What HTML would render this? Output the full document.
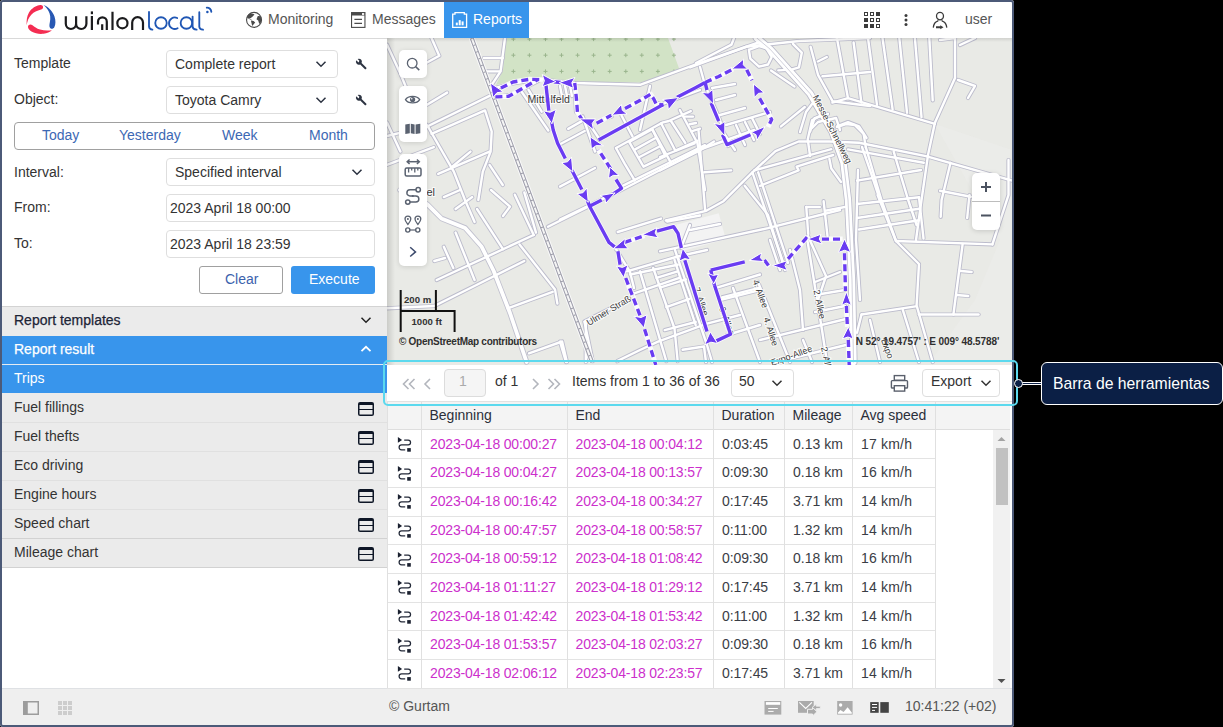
<!DOCTYPE html>
<html><head><meta charset="utf-8">
<style>
*{box-sizing:border-box;margin:0;padding:0}
html,body{width:1223px;height:727px;overflow:hidden;background:#000;font-family:"Liberation Sans",sans-serif;position:relative}
.a{position:absolute}
.t{position:absolute;white-space:nowrap;font-size:14px;line-height:16px;color:#333}
.sel{position:absolute;border:1px solid #dedede;border-radius:4px;background:#fff}
svg{position:absolute;overflow:visible}
</style></head><body>
<div id="app" class="a" style="left:0;top:0;width:1014px;height:727px;background:#fff;overflow:hidden;border-radius:3px">

<!-- HEADER -->
<div class="a" style="left:2px;top:38px;width:385px;height:1px;background:#d9d9d9"></div>
<div class="a" style="left:444px;top:2px;width:85px;height:36px;background:#3895ec"></div>
<div class="t" style="left:268px;top:11px;color:#555">Monitoring</div>
<div class="t" style="left:372px;top:11px;color:#555">Messages</div>
<div class="t" style="left:473px;top:11px;color:#fff">Reports</div>
<div class="t" style="left:965px;top:11px;color:#555">user</div>

<!-- LEFT PANEL FORM -->
<div class="t" style="left:14px;top:55px">Template</div>
<div class="sel" style="left:166px;top:50px;width:172px;height:28px"></div>
<div class="t" style="left:175px;top:56px">Complete report</div>
<div class="t" style="left:14px;top:91px">Object:</div>
<div class="sel" style="left:166px;top:86px;width:172px;height:28px"></div>
<div class="t" style="left:175px;top:92px">Toyota Camry</div>

<div class="a" style="left:14px;top:122px;width:361px;height:28px;border:1px solid #a0a0a0;border-radius:4px"></div>
<div class="t" style="left:42px;top:127px;color:#3c68b4">Today</div>
<div class="t" style="left:119px;top:127px;color:#3c68b4">Yesterday</div>
<div class="t" style="left:222px;top:127px;color:#3c68b4">Week</div>
<div class="t" style="left:309px;top:127px;color:#3c68b4">Month</div>

<div class="t" style="left:14px;top:164px">Interval:</div>
<div class="sel" style="left:166px;top:158px;width:209px;height:28px"></div>
<div class="t" style="left:175px;top:164px">Specified interval</div>
<div class="t" style="left:14px;top:199px">From:</div>
<div class="sel" style="left:166px;top:194px;width:209px;height:28px"></div>
<div class="t" style="left:170px;top:200px">2023 April 18 00:00</div>
<div class="t" style="left:14px;top:235px">To:</div>
<div class="sel" style="left:166px;top:230px;width:209px;height:28px"></div>
<div class="t" style="left:170px;top:236px">2023 April 18 23:59</div>

<div class="a" style="left:199px;top:266px;width:84px;height:28px;border:1px solid #a0a0a0;border-radius:3px;background:#fff"></div>
<div class="t" style="left:225px;top:271px;color:#3c62ad">Clear</div>
<div class="a" style="left:291px;top:266px;width:84px;height:28px;border-radius:3px;background:#3895ec"></div>
<div class="t" style="left:309px;top:271px;color:#fff">Execute</div>

<!-- ACCORDION -->
<div class="a" style="left:2px;top:306px;width:385px;height:1px;background:#d3d3d3"></div>
<div class="a" style="left:2px;top:307px;width:385px;height:29px;background:#ebebeb"></div>
<div class="t" style="left:14px;top:312px;-webkit-text-stroke:0.25px #1d2436;color:#1d2436">Report templates</div>
<div class="a" style="left:2px;top:336px;width:385px;height:28px;background:#3895ec"></div>
<div class="t" style="left:14px;top:341px;color:#fff;-webkit-text-stroke:0.25px #fff">Report result</div>
<div class="a" style="left:2px;top:364px;width:385px;height:1px;background:#e4ebf2"></div>
<div class="a" style="left:2px;top:365px;width:385px;height:28px;background:#3895ec"></div>
<div class="t" style="left:14px;top:370px;color:#fff">Trips</div>

<!-- MAP -->
<div class="a" style="left:387px;top:38px;width:625px;height:327px;background:#e9eae6;overflow:hidden">
<svg style="left:0;top:0" width="625" height="327" viewBox="387 38 625 327">
<path d="M505 38 L503 70 L496 85 L515 80.5 L540 77.5 L576 81.5 L640 82.5 L668 75 L680 71 L668 38 Z" fill="#d2e3c6"/>
<g stroke="#9ab58d" stroke-width="1"><path d="M511.4 39.1 H515.4 M513.4 37.1 V41.1"/><path d="M527.4 39.1 H531.4 M529.4 37.1 V41.1"/><path d="M543.5 39.1 H547.5 M545.5 37.1 V41.1"/><path d="M559.5 39.1 H563.5 M561.5 37.1 V41.1"/><path d="M575.6 39.1 H579.6 M577.6 37.1 V41.1"/><path d="M591.6 39.1 H595.6 M593.6 37.1 V41.1"/><path d="M607.7 39.1 H611.7 M609.7 37.1 V41.1"/><path d="M623.8 39.1 H627.8 M625.8 37.1 V41.1"/><path d="M639.8 39.1 H643.8 M641.8 37.1 V41.1"/><path d="M655.9 39.1 H659.9 M657.9 37.1 V41.1"/><path d="M671.9 39.1 H675.9 M673.9 37.1 V41.1"/><path d="M511.4 55.2 H515.4 M513.4 53.2 V57.2"/><path d="M527.4 55.2 H531.4 M529.4 53.2 V57.2"/><path d="M543.5 55.2 H547.5 M545.5 53.2 V57.2"/><path d="M559.5 55.2 H563.5 M561.5 53.2 V57.2"/><path d="M575.6 55.2 H579.6 M577.6 53.2 V57.2"/><path d="M591.6 55.2 H595.6 M593.6 53.2 V57.2"/><path d="M607.7 55.2 H611.7 M609.7 53.2 V57.2"/><path d="M623.8 55.2 H627.8 M625.8 53.2 V57.2"/><path d="M639.8 55.2 H643.8 M641.8 53.2 V57.2"/><path d="M655.9 55.2 H659.9 M657.9 53.2 V57.2"/><path d="M671.9 55.2 H675.9 M673.9 53.2 V57.2"/><path d="M511.4 71.4 H515.4 M513.4 69.4 V73.4"/><path d="M527.4 71.4 H531.4 M529.4 69.4 V73.4"/><path d="M543.5 71.4 H547.5 M545.5 69.4 V73.4"/><path d="M559.5 71.4 H563.5 M561.5 69.4 V73.4"/><path d="M575.6 71.4 H579.6 M577.6 69.4 V73.4"/><path d="M591.6 71.4 H595.6 M593.6 69.4 V73.4"/><path d="M607.7 71.4 H611.7 M609.7 69.4 V73.4"/><path d="M623.8 71.4 H627.8 M625.8 69.4 V73.4"/><path d="M639.8 71.4 H643.8 M641.8 69.4 V73.4"/><path d="M655.9 71.4 H659.9 M657.9 69.4 V73.4"/><path d="M671.9 71.4 H675.9 M673.9 69.4 V73.4"/></g>
<g fill="#fff"><rect x="679" y="218.5" width="44" height="27" fill="#f3f3f3" transform="rotate(-15 701 232)"/></g><path d="M935 124 L1012 150 L1012 362 L930 362 L975 300 L1000 240 Z" fill="#ededeb" opacity="0.6"/>
<g fill="none" stroke-linejoin="round" stroke-linecap="round">
<polyline points="387.0,44.7 400.4,73.6 416.0,111.5 428.2,127.0" stroke="#bcbccc" stroke-width="4.2"/><polyline points="431.5,38.0 439.3,55.8 427.0,62.5" stroke="#bcbccc" stroke-width="4.2"/><polyline points="427.0,104.8 447.1,92.6" stroke="#bcbccc" stroke-width="4.2"/><polyline points="387.0,136.0 428.2,126.0 491.7,94.8" stroke="#bcbccc" stroke-width="4.2"/><polyline points="387.0,122.6 400.4,151.6" stroke="#bcbccc" stroke-width="4.2"/><polyline points="431.5,133.8 485.0,110.4 491.7,131.5 490.6,151.6 482.8,171.6 478.3,200.0" stroke="#bcbccc" stroke-width="4.2"/><polyline points="428.2,127.0 453.8,171.6 465.0,200.0 474.6,222.0" stroke="#bcbccc" stroke-width="4.2"/><polyline points="451.6,167.2 470.5,151.6" stroke="#bcbccc" stroke-width="4.2"/><polyline points="438.2,173.9 489.5,151.6" stroke="#bcbccc" stroke-width="4.2"/><polyline points="387.0,164.9 433.8,147.1" stroke="#bcbccc" stroke-width="4.2"/><polyline points="489.5,164.9 502.8,185.0" stroke="#bcbccc" stroke-width="4.2"/><polyline points="483.9,58.0 502.8,58.0" stroke="#bcbccc" stroke-width="4.2"/><polyline points="485.0,71.4 500.0,71.4" stroke="#bcbccc" stroke-width="4.2"/><polyline points="505.0,38.0 500.6,71.4 491.7,84.8" stroke="#bcbccc" stroke-width="4.2"/><polyline points="436.7,280.0 533.7,235.0" stroke="#bcbccc" stroke-width="4.2"/><polyline points="387.0,308.3 434.3,306.0 477.0,284.7 524.3,261.0" stroke="#bcbccc" stroke-width="4.2"/><polyline points="519.5,244.4 555.0,289.4 557.4,303.6" stroke="#bcbccc" stroke-width="4.2"/><polyline points="507.7,308.3 552.7,291.8" stroke="#bcbccc" stroke-width="4.2"/><polyline points="455.6,232.6 474.6,280.0" stroke="#bcbccc" stroke-width="4.2"/><polyline points="443.8,246.8 453.3,268.0" stroke="#bcbccc" stroke-width="4.2"/><polyline points="434.3,261.0 445.0,258.0" stroke="#bcbccc" stroke-width="4.2"/><polyline points="477.0,209.0 503.0,249.2" stroke="#bcbccc" stroke-width="4.2"/><polyline points="491.0,190.0 510.0,206.6 503.0,216.0" stroke="#bcbccc" stroke-width="4.2"/><polyline points="514.8,194.7 533.7,235.0" stroke="#bcbccc" stroke-width="4.2"/><polyline points="524.3,192.4 536.0,232.6" stroke="#bcbccc" stroke-width="4.2"/><polyline points="548.0,226.7 588.2,206.6" stroke="#bcbccc" stroke-width="4.2"/><polyline points="443.8,197.1 460.0,190.0" stroke="#bcbccc" stroke-width="4.2"/><polyline points="455.6,209.0 472.2,197.1" stroke="#bcbccc" stroke-width="4.2"/><polyline points="529.0,353.3 562.1,341.5 566.9,362.0" stroke="#bcbccc" stroke-width="4.2"/><polyline points="585.8,322.5 585.8,362.0" stroke="#bcbccc" stroke-width="4.2"/><polyline points="584.5,321.5 631.3,298.0" stroke="#bcbccc" stroke-width="4.2"/><polyline points="491.7,89.0 510.0,84.0 540.0,79.0 560.0,81.5 575.0,83.0 600.0,83.7 640.0,84.8 696.0,64.4 736.9,50.0 760.0,42.0" stroke="#bcbccc" stroke-width="4.2"/><polyline points="495.0,97.0 510.0,95.0 540.0,80.0" stroke="#bcbccc" stroke-width="4.2"/><polyline points="521.8,92.0 548.3,130.5" stroke="#bcbccc" stroke-width="4.2"/><polyline points="528.4,89.7 541.7,111.7" stroke="#bcbccc" stroke-width="4.2"/><polyline points="560.0,86.0 562.0,96.0" stroke="#bcbccc" stroke-width="4.2"/><polyline points="565.0,86.0 567.0,96.0" stroke="#bcbccc" stroke-width="4.2"/><polyline points="570.0,86.0 572.0,96.0" stroke="#bcbccc" stroke-width="4.2"/><polyline points="574.7,83.1 576.0,112.0 590.0,125.0 600.0,140.0" stroke="#bcbccc" stroke-width="4.2"/><polyline points="614.6,246.8 630.0,272.0 634.0,288.0" stroke="#bcbccc" stroke-width="4.2"/><polyline points="675.0,250.0 707.0,345.0 712.0,362.0" stroke="#bcbccc" stroke-width="4.2"/><polyline points="681.0,248.0 690.0,225.0" stroke="#bcbccc" stroke-width="4.2"/><polyline points="690.0,230.0 700.0,228.0 720.0,224.0" stroke="#bcbccc" stroke-width="4.2"/><polyline points="720.0,300.0 760.0,290.0" stroke="#bcbccc" stroke-width="4.2"/><polyline points="733.0,288.0 760.0,362.0" stroke="#bcbccc" stroke-width="4.2"/><polyline points="758.0,282.0 790.0,362.0" stroke="#bcbccc" stroke-width="4.2"/><polyline points="790.0,250.0 800.0,290.0 803.0,330.0" stroke="#bcbccc" stroke-width="4.2"/><polyline points="770.0,240.0 780.0,270.0" stroke="#bcbccc" stroke-width="4.2"/><polyline points="808.0,236.0 826.0,276.0 818.0,300.0" stroke="#bcbccc" stroke-width="4.2"/><polyline points="815.0,282.0 840.0,272.0" stroke="#bcbccc" stroke-width="4.2"/><polyline points="727.0,335.0 760.0,325.0" stroke="#bcbccc" stroke-width="4.2"/><polyline points="760.0,340.0 850.0,318.0" stroke="#bcbccc" stroke-width="4.2"/><polyline points="776.0,362.0 850.0,344.0" stroke="#bcbccc" stroke-width="4.2"/><polyline points="803.0,340.0 812.0,362.0" stroke="#bcbccc" stroke-width="4.2"/><polyline points="807.0,238.0 822.0,330.0 827.0,362.0" stroke="#bcbccc" stroke-width="4.2"/><polyline points="815.0,295.0 845.0,290.0" stroke="#bcbccc" stroke-width="4.2"/><polyline points="815.0,312.0 845.0,306.0" stroke="#bcbccc" stroke-width="4.2"/><polyline points="560.0,219.6 621.9,189.7 700.0,149.5 754.3,130.0" stroke="#bcbccc" stroke-width="4.2"/><polyline points="560.0,186.6 595.0,168.0" stroke="#bcbccc" stroke-width="4.2"/><polyline points="560.0,144.3 584.7,131.0" stroke="#bcbccc" stroke-width="4.2"/><polyline points="568.2,128.9 582.7,120.6" stroke="#bcbccc" stroke-width="4.2"/><polyline points="582.7,116.5 595.0,151.5" stroke="#bcbccc" stroke-width="4.2"/><polyline points="617.7,232.0 661.0,218.6" stroke="#bcbccc" stroke-width="4.2"/><polyline points="667.2,221.6 700.0,215.5" stroke="#bcbccc" stroke-width="4.2"/><polyline points="665.8,220.5 706.2,210.8 723.5,201.2 752.4,172.3 775.5,151.2 798.6,141.5 829.4,141.5 859.0,142.7 926.0,156.1 1012.0,180.6" stroke="#bcbccc" stroke-width="4.2"/><polyline points="754.3,170.4 831.3,149.2" stroke="#bcbccc" stroke-width="4.2"/><polyline points="744.7,185.8 767.8,214.7 785.0,270.0" stroke="#bcbccc" stroke-width="4.2"/><polyline points="752.4,172.3 783.2,262.8" stroke="#bcbccc" stroke-width="4.2"/><polyline points="758.2,172.3 788.0,262.8" stroke="#bcbccc" stroke-width="4.2"/><polyline points="760.0,185.8 798.6,170.4 796.7,166.6 833.2,155.0" stroke="#bcbccc" stroke-width="4.2"/><polyline points="660.0,170.4 698.5,151.2 714.0,141.5" stroke="#bcbccc" stroke-width="4.2"/><polyline points="698.5,130.0 705.2,210.8" stroke="#bcbccc" stroke-width="4.2"/><polyline points="704.3,172.3 731.2,170.4" stroke="#bcbccc" stroke-width="4.2"/><polyline points="660.0,157.0 694.6,143.5" stroke="#bcbccc" stroke-width="4.2"/><polyline points="660.0,251.3 767.8,228.2 840.0,210.0" stroke="#bcbccc" stroke-width="4.2"/><polyline points="806.3,207.0 819.8,207.0" stroke="#bcbccc" stroke-width="4.2"/><polyline points="806.3,207.0 808.2,234.0" stroke="#bcbccc" stroke-width="4.2"/><polyline points="823.6,201.2 827.5,235.9" stroke="#bcbccc" stroke-width="4.2"/><polyline points="825.5,210.8 844.8,207.0" stroke="#bcbccc" stroke-width="4.2"/><polyline points="829.4,158.9 831.3,168.5 841.0,182.0" stroke="#bcbccc" stroke-width="4.2"/><polyline points="812.0,128.0 818.0,122.0 836.0,118.0 840.0,130.0" stroke="#bcbccc" stroke-width="4.2"/><polyline points="800.0,132.0 806.0,112.0 812.0,104.0" stroke="#bcbccc" stroke-width="4.2"/><polyline points="836.9,127.1 846.0,124.0 854.7,125.0 863.6,133.8 865.8,147.2" stroke="#bcbccc" stroke-width="4.2"/><polyline points="810.1,131.6 814.6,118.2 828.0,113.8" stroke="#bcbccc" stroke-width="4.2"/><polyline points="807.9,140.5 810.1,156.0" stroke="#bcbccc" stroke-width="4.2"/><polyline points="862.0,147.0 870.0,170.0 880.0,200.0" stroke="#bcbccc" stroke-width="4.2"/><polyline points="622.6,185.9 705.0,145.2" stroke="#bcbccc" stroke-width="4.2"/><polyline points="616.0,148.0 662.2,122.7 668.8,121.0 690.8,111.1" stroke="#bcbccc" stroke-width="4.2"/><polyline points="616.0,148.0 624.8,163.9 634.7,180.4" stroke="#bcbccc" stroke-width="4.2"/><polyline points="629.2,141.9 643.5,166.7 665.5,156.2 652.3,129.3 629.2,141.9" stroke="#bcbccc" stroke-width="4.2"/><polyline points="634.7,149.6 655.6,138.0" stroke="#bcbccc" stroke-width="4.2"/><polyline points="639.1,157.3 660.0,146.3" stroke="#bcbccc" stroke-width="4.2"/><polyline points="652.3,129.3 671.0,162.8" stroke="#bcbccc" stroke-width="4.2"/><polyline points="661.1,123.2 675.4,150.7 697.4,140.8" stroke="#bcbccc" stroke-width="4.2"/><polyline points="671.0,121.0 685.3,143.0" stroke="#bcbccc" stroke-width="4.2"/><polyline points="679.8,110.0 697.4,143.0 705.0,190.0" stroke="#bcbccc" stroke-width="4.2"/><polyline points="684.0,116.6 693.0,116.6" stroke="#bcbccc" stroke-width="4.2"/><polyline points="689.7,124.3 696.0,123.0" stroke="#bcbccc" stroke-width="4.2"/><polyline points="693.0,130.9 700.0,128.7" stroke="#bcbccc" stroke-width="4.2"/><polyline points="605.0,118.8 611.6,116.6" stroke="#bcbccc" stroke-width="4.2"/><polyline points="621.5,115.5 632.5,136.4" stroke="#bcbccc" stroke-width="4.2"/><polyline points="748.9,49.8 750.3,58.6 759.0,66.7 768.0,64.5 771.7,57.0 766.5,48.3 759.0,46.1 748.9,49.8" stroke="#bcbccc" stroke-width="4.2"/><polyline points="690.0,67.4 746.0,46.8 799.0,41.0 837.0,39.5 870.0,38.0" stroke="#bcbccc" stroke-width="4.2"/><polyline points="696.0,63.0 731.5,44.6 734.0,38.0" stroke="#bcbccc" stroke-width="4.2"/><polyline points="793.0,43.9 801.8,52.7 798.9,67.4 791.5,69.6 778.3,70.4" stroke="#bcbccc" stroke-width="4.2"/><polyline points="771.0,70.4 794.5,86.5" stroke="#bcbccc" stroke-width="4.2"/><polyline points="781.0,126.4 804.8,107.0" stroke="#bcbccc" stroke-width="4.2"/><polyline points="807.7,139.5 812.0,120.4 822.4,114.5" stroke="#bcbccc" stroke-width="4.2"/><polyline points="837.0,126.3 848.0,122.0 859.0,126.3 866.5,138.0" stroke="#bcbccc" stroke-width="4.2"/><polyline points="810.6,46.8 818.0,74.8 832.7,101.3 870.0,106.0" stroke="#bcbccc" stroke-width="4.2"/><polyline points="817.9,61.5 826.8,57.0" stroke="#bcbccc" stroke-width="4.2"/><polyline points="822.4,76.3 870.0,72.0" stroke="#bcbccc" stroke-width="4.2"/><polyline points="627.0,271.3 677.7,256.5 707.0,250.0" stroke="#bcbccc" stroke-width="4.2"/><polyline points="630.3,274.5 677.7,264.7" stroke="#bcbccc" stroke-width="4.2"/><polyline points="632.0,294.2 679.4,277.8" stroke="#bcbccc" stroke-width="4.2"/><polyline points="717.0,287.6 760.0,274.5" stroke="#bcbccc" stroke-width="4.2"/><polyline points="722.0,297.4 760.0,287.6" stroke="#bcbccc" stroke-width="4.2"/><polyline points="640.0,271.3 666.3,361.2" stroke="#bcbccc" stroke-width="4.2"/><polyline points="653.2,268.0 674.5,328.5 677.7,361.2" stroke="#bcbccc" stroke-width="4.2"/><polyline points="674.5,259.8 695.7,325.2" stroke="#bcbccc" stroke-width="4.2"/><polyline points="656.5,277.8 677.7,271.3" stroke="#bcbccc" stroke-width="4.2"/><polyline points="660.0,287.6 686.0,279.4" stroke="#bcbccc" stroke-width="4.2"/><polyline points="666.3,307.2 689.2,299.0" stroke="#bcbccc" stroke-width="4.2"/><polyline points="664.7,330.1 695.7,322.0" stroke="#bcbccc" stroke-width="4.2"/><polyline points="617.2,361.2 640.0,350.0 658.0,341.6 707.0,323.6 740.0,315.0" stroke="#bcbccc" stroke-width="4.2"/><polyline points="682.6,349.8 704.0,346.5 706.0,362.0" stroke="#bcbccc" stroke-width="4.2"/><polyline points="584.5,322.0 592.7,361.2" stroke="#bcbccc" stroke-width="4.2"/><polyline points="560.0,341.6 566.0,362.0" stroke="#bcbccc" stroke-width="4.2"/><polyline points="640.0,100.0 649.8,93.9 655.1,102.2 661.2,104.5 700.0,90.0" stroke="#bcbccc" stroke-width="4.2"/><polyline points="650.0,86.0 640.0,130.0" stroke="#bcbccc" stroke-width="4.2"/><polyline points="700.0,67.0 705.0,85.0 720.0,120.0 728.0,146.0" stroke="#bcbccc" stroke-width="4.2"/><polyline points="712.0,88.0 735.0,84.0" stroke="#bcbccc" stroke-width="4.2"/><polyline points="716.0,100.0 735.0,95.0" stroke="#bcbccc" stroke-width="4.2"/><polyline points="720.0,115.0 745.0,108.0" stroke="#bcbccc" stroke-width="4.2"/><polyline points="726.0,125.0 770.0,112.0" stroke="#bcbccc" stroke-width="4.2"/><polyline points="725.0,135.0 735.0,150.0" stroke="#bcbccc" stroke-width="4.2"/><polyline points="736.0,125.0 745.0,145.0" stroke="#bcbccc" stroke-width="4.2"/><polyline points="745.0,122.0 754.0,140.0" stroke="#bcbccc" stroke-width="4.2"/><polyline points="752.0,118.0 760.0,134.0" stroke="#bcbccc" stroke-width="4.2"/><polyline points="832.4,102.6 848.0,98.2 934.9,123.8" stroke="#bcbccc" stroke-width="4.2"/><polyline points="836.9,38.0 848.0,98.2" stroke="#bcbccc" stroke-width="4.2"/><polyline points="853.6,42.5 861.4,102.6" stroke="#bcbccc" stroke-width="4.2"/><polyline points="868.0,38.0 877.0,104.9" stroke="#bcbccc" stroke-width="4.2"/><polyline points="882.5,38.0 892.6,109.3" stroke="#bcbccc" stroke-width="4.2"/><polyline points="899.3,38.0 907.0,112.7" stroke="#bcbccc" stroke-width="4.2"/><polyline points="914.9,38.0 921.5,117.1" stroke="#bcbccc" stroke-width="4.2"/><polyline points="929.3,38.0 932.7,100.4" stroke="#bcbccc" stroke-width="4.2"/><polyline points="940.0,40.0 955.0,38.0" stroke="#bcbccc" stroke-width="4.2"/><polyline points="960.0,45.0 975.0,38.0" stroke="#bcbccc" stroke-width="4.2"/><polyline points="958.0,80.0 975.0,86.0 968.0,98.0" stroke="#bcbccc" stroke-width="4.2"/><polyline points="955.0,38.0 955.0,78.1 934.9,122.7 928.2,153.9 921.5,200.0 916.0,240.0" stroke="#bcbccc" stroke-width="4.2"/><polyline points="848.0,149.4 923.8,162.8" stroke="#bcbccc" stroke-width="4.2"/><polyline points="857.0,180.6 921.0,170.0" stroke="#bcbccc" stroke-width="4.2"/><polyline points="865.8,147.2 881.4,200.0 896.0,241.0" stroke="#bcbccc" stroke-width="4.2"/><polyline points="893.7,151.7 908.2,200.0 916.6,225.0" stroke="#bcbccc" stroke-width="4.2"/><polyline points="950.5,162.8 941.6,200.0 940.7,216.8" stroke="#bcbccc" stroke-width="4.2"/><polyline points="969.5,195.0 967.2,218.0" stroke="#bcbccc" stroke-width="4.2"/><polyline points="940.0,190.8 970.8,196.8" stroke="#bcbccc" stroke-width="4.2"/><polyline points="1008.5,160.0 1008.5,195.0 992.4,244.4" stroke="#bcbccc" stroke-width="4.2"/><polyline points="857.0,204.0 919.0,197.3" stroke="#bcbccc" stroke-width="4.2"/><polyline points="857.0,218.0 919.0,208.8" stroke="#bcbccc" stroke-width="4.2"/><polyline points="859.0,229.5 919.0,220.3" stroke="#bcbccc" stroke-width="4.2"/><polyline points="877.6,195.0 896.0,241.0 919.0,264.0 916.6,305.3 932.7,362.0" stroke="#bcbccc" stroke-width="4.2"/><polyline points="896.0,241.0 992.4,244.4" stroke="#bcbccc" stroke-width="4.2"/><polyline points="962.6,244.4 953.4,314.5" stroke="#bcbccc" stroke-width="4.2"/><polyline points="959.0,270.8 971.7,272.0" stroke="#bcbccc" stroke-width="4.2"/><polyline points="956.8,295.0 968.3,296.0" stroke="#bcbccc" stroke-width="4.2"/><polyline points="861.5,314.5 915.5,306.4" stroke="#bcbccc" stroke-width="4.2"/><polyline points="918.9,314.5 978.6,314.5" stroke="#bcbccc" stroke-width="4.2"/><polyline points="902.8,309.9 918.9,362.0" stroke="#bcbccc" stroke-width="4.2"/><polyline points="861.5,314.5 857.0,332.8" stroke="#bcbccc" stroke-width="4.2"/><polyline points="870.0,320.0 880.0,362.0" stroke="#bcbccc" stroke-width="4.2"/><polyline points="919.0,197.3 923.5,238.6" stroke="#bcbccc" stroke-width="4.2"/><polyline points="858.0,170.0 856.0,240.0 860.0,300.0" stroke="#bcbccc" stroke-width="4.2"/><polyline points="400.0,190.0 427.2,204.2 441.4,218.4 465.1,227.9 481.7,246.8 493.5,270.5 510.0,313.0 526.6,362.0" stroke="#c0c0ce" stroke-width="5.5"/><polyline points="756.8,38.0 770.0,49.1 810.1,93.7 832.4,131.6 843.5,162.8 848.0,200.0 852.0,280.0 853.5,362.0" stroke="#b8b8c8" stroke-width="8"/><polyline points="387.0,44.7 400.4,73.6 416.0,111.5 428.2,127.0" stroke="#fff" stroke-width="2.4"/><polyline points="431.5,38.0 439.3,55.8 427.0,62.5" stroke="#fff" stroke-width="2.4"/><polyline points="427.0,104.8 447.1,92.6" stroke="#fff" stroke-width="2.4"/><polyline points="387.0,136.0 428.2,126.0 491.7,94.8" stroke="#fff" stroke-width="2.4"/><polyline points="387.0,122.6 400.4,151.6" stroke="#fff" stroke-width="2.4"/><polyline points="431.5,133.8 485.0,110.4 491.7,131.5 490.6,151.6 482.8,171.6 478.3,200.0" stroke="#fff" stroke-width="2.4"/><polyline points="428.2,127.0 453.8,171.6 465.0,200.0 474.6,222.0" stroke="#fff" stroke-width="2.4"/><polyline points="451.6,167.2 470.5,151.6" stroke="#fff" stroke-width="2.4"/><polyline points="438.2,173.9 489.5,151.6" stroke="#fff" stroke-width="2.4"/><polyline points="387.0,164.9 433.8,147.1" stroke="#fff" stroke-width="2.4"/><polyline points="489.5,164.9 502.8,185.0" stroke="#fff" stroke-width="2.4"/><polyline points="483.9,58.0 502.8,58.0" stroke="#fff" stroke-width="2.4"/><polyline points="485.0,71.4 500.0,71.4" stroke="#fff" stroke-width="2.4"/><polyline points="505.0,38.0 500.6,71.4 491.7,84.8" stroke="#fff" stroke-width="2.4"/><polyline points="436.7,280.0 533.7,235.0" stroke="#fff" stroke-width="2.4"/><polyline points="387.0,308.3 434.3,306.0 477.0,284.7 524.3,261.0" stroke="#fff" stroke-width="2.4"/><polyline points="519.5,244.4 555.0,289.4 557.4,303.6" stroke="#fff" stroke-width="2.4"/><polyline points="507.7,308.3 552.7,291.8" stroke="#fff" stroke-width="2.4"/><polyline points="455.6,232.6 474.6,280.0" stroke="#fff" stroke-width="2.4"/><polyline points="443.8,246.8 453.3,268.0" stroke="#fff" stroke-width="2.4"/><polyline points="434.3,261.0 445.0,258.0" stroke="#fff" stroke-width="2.4"/><polyline points="477.0,209.0 503.0,249.2" stroke="#fff" stroke-width="2.4"/><polyline points="491.0,190.0 510.0,206.6 503.0,216.0" stroke="#fff" stroke-width="2.4"/><polyline points="514.8,194.7 533.7,235.0" stroke="#fff" stroke-width="2.4"/><polyline points="524.3,192.4 536.0,232.6" stroke="#fff" stroke-width="2.4"/><polyline points="548.0,226.7 588.2,206.6" stroke="#fff" stroke-width="2.4"/><polyline points="443.8,197.1 460.0,190.0" stroke="#fff" stroke-width="2.4"/><polyline points="455.6,209.0 472.2,197.1" stroke="#fff" stroke-width="2.4"/><polyline points="529.0,353.3 562.1,341.5 566.9,362.0" stroke="#fff" stroke-width="2.4"/><polyline points="585.8,322.5 585.8,362.0" stroke="#fff" stroke-width="2.4"/><polyline points="584.5,321.5 631.3,298.0" stroke="#fff" stroke-width="2.4"/><polyline points="491.7,89.0 510.0,84.0 540.0,79.0 560.0,81.5 575.0,83.0 600.0,83.7 640.0,84.8 696.0,64.4 736.9,50.0 760.0,42.0" stroke="#fff" stroke-width="2.4"/><polyline points="495.0,97.0 510.0,95.0 540.0,80.0" stroke="#fff" stroke-width="2.4"/><polyline points="521.8,92.0 548.3,130.5" stroke="#fff" stroke-width="2.4"/><polyline points="528.4,89.7 541.7,111.7" stroke="#fff" stroke-width="2.4"/><polyline points="560.0,86.0 562.0,96.0" stroke="#fff" stroke-width="2.4"/><polyline points="565.0,86.0 567.0,96.0" stroke="#fff" stroke-width="2.4"/><polyline points="570.0,86.0 572.0,96.0" stroke="#fff" stroke-width="2.4"/><polyline points="574.7,83.1 576.0,112.0 590.0,125.0 600.0,140.0" stroke="#fff" stroke-width="2.4"/><polyline points="614.6,246.8 630.0,272.0 634.0,288.0" stroke="#fff" stroke-width="2.4"/><polyline points="675.0,250.0 707.0,345.0 712.0,362.0" stroke="#fff" stroke-width="2.4"/><polyline points="681.0,248.0 690.0,225.0" stroke="#fff" stroke-width="2.4"/><polyline points="690.0,230.0 700.0,228.0 720.0,224.0" stroke="#fff" stroke-width="2.4"/><polyline points="720.0,300.0 760.0,290.0" stroke="#fff" stroke-width="2.4"/><polyline points="733.0,288.0 760.0,362.0" stroke="#fff" stroke-width="2.4"/><polyline points="758.0,282.0 790.0,362.0" stroke="#fff" stroke-width="2.4"/><polyline points="790.0,250.0 800.0,290.0 803.0,330.0" stroke="#fff" stroke-width="2.4"/><polyline points="770.0,240.0 780.0,270.0" stroke="#fff" stroke-width="2.4"/><polyline points="808.0,236.0 826.0,276.0 818.0,300.0" stroke="#fff" stroke-width="2.4"/><polyline points="815.0,282.0 840.0,272.0" stroke="#fff" stroke-width="2.4"/><polyline points="727.0,335.0 760.0,325.0" stroke="#fff" stroke-width="2.4"/><polyline points="760.0,340.0 850.0,318.0" stroke="#fff" stroke-width="2.4"/><polyline points="776.0,362.0 850.0,344.0" stroke="#fff" stroke-width="2.4"/><polyline points="803.0,340.0 812.0,362.0" stroke="#fff" stroke-width="2.4"/><polyline points="807.0,238.0 822.0,330.0 827.0,362.0" stroke="#fff" stroke-width="2.4"/><polyline points="815.0,295.0 845.0,290.0" stroke="#fff" stroke-width="2.4"/><polyline points="815.0,312.0 845.0,306.0" stroke="#fff" stroke-width="2.4"/><polyline points="560.0,219.6 621.9,189.7 700.0,149.5 754.3,130.0" stroke="#fff" stroke-width="2.4"/><polyline points="560.0,186.6 595.0,168.0" stroke="#fff" stroke-width="2.4"/><polyline points="560.0,144.3 584.7,131.0" stroke="#fff" stroke-width="2.4"/><polyline points="568.2,128.9 582.7,120.6" stroke="#fff" stroke-width="2.4"/><polyline points="582.7,116.5 595.0,151.5" stroke="#fff" stroke-width="2.4"/><polyline points="617.7,232.0 661.0,218.6" stroke="#fff" stroke-width="2.4"/><polyline points="667.2,221.6 700.0,215.5" stroke="#fff" stroke-width="2.4"/><polyline points="665.8,220.5 706.2,210.8 723.5,201.2 752.4,172.3 775.5,151.2 798.6,141.5 829.4,141.5 859.0,142.7 926.0,156.1 1012.0,180.6" stroke="#fff" stroke-width="2.4"/><polyline points="754.3,170.4 831.3,149.2" stroke="#fff" stroke-width="2.4"/><polyline points="744.7,185.8 767.8,214.7 785.0,270.0" stroke="#fff" stroke-width="2.4"/><polyline points="752.4,172.3 783.2,262.8" stroke="#fff" stroke-width="2.4"/><polyline points="758.2,172.3 788.0,262.8" stroke="#fff" stroke-width="2.4"/><polyline points="760.0,185.8 798.6,170.4 796.7,166.6 833.2,155.0" stroke="#fff" stroke-width="2.4"/><polyline points="660.0,170.4 698.5,151.2 714.0,141.5" stroke="#fff" stroke-width="2.4"/><polyline points="698.5,130.0 705.2,210.8" stroke="#fff" stroke-width="2.4"/><polyline points="704.3,172.3 731.2,170.4" stroke="#fff" stroke-width="2.4"/><polyline points="660.0,157.0 694.6,143.5" stroke="#fff" stroke-width="2.4"/><polyline points="660.0,251.3 767.8,228.2 840.0,210.0" stroke="#fff" stroke-width="2.4"/><polyline points="806.3,207.0 819.8,207.0" stroke="#fff" stroke-width="2.4"/><polyline points="806.3,207.0 808.2,234.0" stroke="#fff" stroke-width="2.4"/><polyline points="823.6,201.2 827.5,235.9" stroke="#fff" stroke-width="2.4"/><polyline points="825.5,210.8 844.8,207.0" stroke="#fff" stroke-width="2.4"/><polyline points="829.4,158.9 831.3,168.5 841.0,182.0" stroke="#fff" stroke-width="2.4"/><polyline points="812.0,128.0 818.0,122.0 836.0,118.0 840.0,130.0" stroke="#fff" stroke-width="2.4"/><polyline points="800.0,132.0 806.0,112.0 812.0,104.0" stroke="#fff" stroke-width="2.4"/><polyline points="836.9,127.1 846.0,124.0 854.7,125.0 863.6,133.8 865.8,147.2" stroke="#fff" stroke-width="2.4"/><polyline points="810.1,131.6 814.6,118.2 828.0,113.8" stroke="#fff" stroke-width="2.4"/><polyline points="807.9,140.5 810.1,156.0" stroke="#fff" stroke-width="2.4"/><polyline points="862.0,147.0 870.0,170.0 880.0,200.0" stroke="#fff" stroke-width="2.4"/><polyline points="622.6,185.9 705.0,145.2" stroke="#fff" stroke-width="2.4"/><polyline points="616.0,148.0 662.2,122.7 668.8,121.0 690.8,111.1" stroke="#fff" stroke-width="2.4"/><polyline points="616.0,148.0 624.8,163.9 634.7,180.4" stroke="#fff" stroke-width="2.4"/><polyline points="629.2,141.9 643.5,166.7 665.5,156.2 652.3,129.3 629.2,141.9" stroke="#fff" stroke-width="2.4"/><polyline points="634.7,149.6 655.6,138.0" stroke="#fff" stroke-width="2.4"/><polyline points="639.1,157.3 660.0,146.3" stroke="#fff" stroke-width="2.4"/><polyline points="652.3,129.3 671.0,162.8" stroke="#fff" stroke-width="2.4"/><polyline points="661.1,123.2 675.4,150.7 697.4,140.8" stroke="#fff" stroke-width="2.4"/><polyline points="671.0,121.0 685.3,143.0" stroke="#fff" stroke-width="2.4"/><polyline points="679.8,110.0 697.4,143.0 705.0,190.0" stroke="#fff" stroke-width="2.4"/><polyline points="684.0,116.6 693.0,116.6" stroke="#fff" stroke-width="2.4"/><polyline points="689.7,124.3 696.0,123.0" stroke="#fff" stroke-width="2.4"/><polyline points="693.0,130.9 700.0,128.7" stroke="#fff" stroke-width="2.4"/><polyline points="605.0,118.8 611.6,116.6" stroke="#fff" stroke-width="2.4"/><polyline points="621.5,115.5 632.5,136.4" stroke="#fff" stroke-width="2.4"/><polyline points="748.9,49.8 750.3,58.6 759.0,66.7 768.0,64.5 771.7,57.0 766.5,48.3 759.0,46.1 748.9,49.8" stroke="#fff" stroke-width="2.4"/><polyline points="690.0,67.4 746.0,46.8 799.0,41.0 837.0,39.5 870.0,38.0" stroke="#fff" stroke-width="2.4"/><polyline points="696.0,63.0 731.5,44.6 734.0,38.0" stroke="#fff" stroke-width="2.4"/><polyline points="793.0,43.9 801.8,52.7 798.9,67.4 791.5,69.6 778.3,70.4" stroke="#fff" stroke-width="2.4"/><polyline points="771.0,70.4 794.5,86.5" stroke="#fff" stroke-width="2.4"/><polyline points="781.0,126.4 804.8,107.0" stroke="#fff" stroke-width="2.4"/><polyline points="807.7,139.5 812.0,120.4 822.4,114.5" stroke="#fff" stroke-width="2.4"/><polyline points="837.0,126.3 848.0,122.0 859.0,126.3 866.5,138.0" stroke="#fff" stroke-width="2.4"/><polyline points="810.6,46.8 818.0,74.8 832.7,101.3 870.0,106.0" stroke="#fff" stroke-width="2.4"/><polyline points="817.9,61.5 826.8,57.0" stroke="#fff" stroke-width="2.4"/><polyline points="822.4,76.3 870.0,72.0" stroke="#fff" stroke-width="2.4"/><polyline points="627.0,271.3 677.7,256.5 707.0,250.0" stroke="#fff" stroke-width="2.4"/><polyline points="630.3,274.5 677.7,264.7" stroke="#fff" stroke-width="2.4"/><polyline points="632.0,294.2 679.4,277.8" stroke="#fff" stroke-width="2.4"/><polyline points="717.0,287.6 760.0,274.5" stroke="#fff" stroke-width="2.4"/><polyline points="722.0,297.4 760.0,287.6" stroke="#fff" stroke-width="2.4"/><polyline points="640.0,271.3 666.3,361.2" stroke="#fff" stroke-width="2.4"/><polyline points="653.2,268.0 674.5,328.5 677.7,361.2" stroke="#fff" stroke-width="2.4"/><polyline points="674.5,259.8 695.7,325.2" stroke="#fff" stroke-width="2.4"/><polyline points="656.5,277.8 677.7,271.3" stroke="#fff" stroke-width="2.4"/><polyline points="660.0,287.6 686.0,279.4" stroke="#fff" stroke-width="2.4"/><polyline points="666.3,307.2 689.2,299.0" stroke="#fff" stroke-width="2.4"/><polyline points="664.7,330.1 695.7,322.0" stroke="#fff" stroke-width="2.4"/><polyline points="617.2,361.2 640.0,350.0 658.0,341.6 707.0,323.6 740.0,315.0" stroke="#fff" stroke-width="2.4"/><polyline points="682.6,349.8 704.0,346.5 706.0,362.0" stroke="#fff" stroke-width="2.4"/><polyline points="584.5,322.0 592.7,361.2" stroke="#fff" stroke-width="2.4"/><polyline points="560.0,341.6 566.0,362.0" stroke="#fff" stroke-width="2.4"/><polyline points="640.0,100.0 649.8,93.9 655.1,102.2 661.2,104.5 700.0,90.0" stroke="#fff" stroke-width="2.4"/><polyline points="650.0,86.0 640.0,130.0" stroke="#fff" stroke-width="2.4"/><polyline points="700.0,67.0 705.0,85.0 720.0,120.0 728.0,146.0" stroke="#fff" stroke-width="2.4"/><polyline points="712.0,88.0 735.0,84.0" stroke="#fff" stroke-width="2.4"/><polyline points="716.0,100.0 735.0,95.0" stroke="#fff" stroke-width="2.4"/><polyline points="720.0,115.0 745.0,108.0" stroke="#fff" stroke-width="2.4"/><polyline points="726.0,125.0 770.0,112.0" stroke="#fff" stroke-width="2.4"/><polyline points="725.0,135.0 735.0,150.0" stroke="#fff" stroke-width="2.4"/><polyline points="736.0,125.0 745.0,145.0" stroke="#fff" stroke-width="2.4"/><polyline points="745.0,122.0 754.0,140.0" stroke="#fff" stroke-width="2.4"/><polyline points="752.0,118.0 760.0,134.0" stroke="#fff" stroke-width="2.4"/><polyline points="832.4,102.6 848.0,98.2 934.9,123.8" stroke="#fff" stroke-width="2.4"/><polyline points="836.9,38.0 848.0,98.2" stroke="#fff" stroke-width="2.4"/><polyline points="853.6,42.5 861.4,102.6" stroke="#fff" stroke-width="2.4"/><polyline points="868.0,38.0 877.0,104.9" stroke="#fff" stroke-width="2.4"/><polyline points="882.5,38.0 892.6,109.3" stroke="#fff" stroke-width="2.4"/><polyline points="899.3,38.0 907.0,112.7" stroke="#fff" stroke-width="2.4"/><polyline points="914.9,38.0 921.5,117.1" stroke="#fff" stroke-width="2.4"/><polyline points="929.3,38.0 932.7,100.4" stroke="#fff" stroke-width="2.4"/><polyline points="940.0,40.0 955.0,38.0" stroke="#fff" stroke-width="2.4"/><polyline points="960.0,45.0 975.0,38.0" stroke="#fff" stroke-width="2.4"/><polyline points="958.0,80.0 975.0,86.0 968.0,98.0" stroke="#fff" stroke-width="2.4"/><polyline points="955.0,38.0 955.0,78.1 934.9,122.7 928.2,153.9 921.5,200.0 916.0,240.0" stroke="#fff" stroke-width="2.4"/><polyline points="848.0,149.4 923.8,162.8" stroke="#fff" stroke-width="2.4"/><polyline points="857.0,180.6 921.0,170.0" stroke="#fff" stroke-width="2.4"/><polyline points="865.8,147.2 881.4,200.0 896.0,241.0" stroke="#fff" stroke-width="2.4"/><polyline points="893.7,151.7 908.2,200.0 916.6,225.0" stroke="#fff" stroke-width="2.4"/><polyline points="950.5,162.8 941.6,200.0 940.7,216.8" stroke="#fff" stroke-width="2.4"/><polyline points="969.5,195.0 967.2,218.0" stroke="#fff" stroke-width="2.4"/><polyline points="940.0,190.8 970.8,196.8" stroke="#fff" stroke-width="2.4"/><polyline points="1008.5,160.0 1008.5,195.0 992.4,244.4" stroke="#fff" stroke-width="2.4"/><polyline points="857.0,204.0 919.0,197.3" stroke="#fff" stroke-width="2.4"/><polyline points="857.0,218.0 919.0,208.8" stroke="#fff" stroke-width="2.4"/><polyline points="859.0,229.5 919.0,220.3" stroke="#fff" stroke-width="2.4"/><polyline points="877.6,195.0 896.0,241.0 919.0,264.0 916.6,305.3 932.7,362.0" stroke="#fff" stroke-width="2.4"/><polyline points="896.0,241.0 992.4,244.4" stroke="#fff" stroke-width="2.4"/><polyline points="962.6,244.4 953.4,314.5" stroke="#fff" stroke-width="2.4"/><polyline points="959.0,270.8 971.7,272.0" stroke="#fff" stroke-width="2.4"/><polyline points="956.8,295.0 968.3,296.0" stroke="#fff" stroke-width="2.4"/><polyline points="861.5,314.5 915.5,306.4" stroke="#fff" stroke-width="2.4"/><polyline points="918.9,314.5 978.6,314.5" stroke="#fff" stroke-width="2.4"/><polyline points="902.8,309.9 918.9,362.0" stroke="#fff" stroke-width="2.4"/><polyline points="861.5,314.5 857.0,332.8" stroke="#fff" stroke-width="2.4"/><polyline points="870.0,320.0 880.0,362.0" stroke="#fff" stroke-width="2.4"/><polyline points="919.0,197.3 923.5,238.6" stroke="#fff" stroke-width="2.4"/><polyline points="858.0,170.0 856.0,240.0 860.0,300.0" stroke="#fff" stroke-width="2.4"/><polyline points="400.0,190.0 427.2,204.2 441.4,218.4 465.1,227.9 481.7,246.8 493.5,270.5 510.0,313.0 526.6,362.0" stroke="#fff" stroke-width="3.8"/><polyline points="756.8,38.0 770.0,49.1 810.1,93.7 832.4,131.6 843.5,162.8 848.0,200.0 852.0,280.0 853.5,362.0" stroke="#fff" stroke-width="6.4"/><polyline points="756.8,38.0 770.0,49.1 810.1,93.7 832.4,131.6 843.5,162.8 848.0,200.0 852.0,280.0 853.5,362.0" stroke="#c4c4d0" stroke-width="0.8"/>
</g>
<polyline points="471.7,38.0 531.9,200.0 592.0,362.0" fill="none" stroke="#fafafa" stroke-width="6"/><polyline points="471.7,38.0 531.9,200.0 592.0,362.0" fill="none" stroke="#9d9daa" stroke-width="4"/><polyline points="471.7,38.0 531.9,200.0 592.0,362.0" fill="none" stroke="#f6f6f6" stroke-width="2"/><polyline points="471.7,38.0 531.9,200.0 592.0,362.0" fill="none" stroke="#9d9daa" stroke-width="2.2" stroke-dasharray="1 6.2"/>
</svg>
<svg style="left:0;top:0" width="625" height="327" viewBox="387 38 625 327">
<text x="527.5" y="102.8" font-family="Liberation Sans" font-size="10.6" font-weight="normal" text-anchor="start" fill="#3a3a3a" stroke="#fff" stroke-width="2" stroke-opacity="0.8" paint-order="stroke">Mittelfeld</text>
<text x="426.5" y="196.2" font-family="Liberation Sans" font-size="11" font-weight="normal" text-anchor="start" fill="#3a3a3a" stroke="#fff" stroke-width="2" stroke-opacity="0.8" paint-order="stroke">el</text>
<text x="589" y="326" transform="rotate(-31 589 326)" font-family="Liberation Sans" font-size="9.2" font-weight="normal" text-anchor="start" fill="#3a3a3a" stroke="#fff" stroke-width="2" stroke-opacity="0.8" paint-order="stroke">Ulmer Straße</text>
<text x="812.5" y="97" transform="rotate(63 812.5 97)" font-family="Liberation Sans" font-size="9" font-weight="normal" text-anchor="start" fill="#3a3a3a" stroke="#fff" stroke-width="2" stroke-opacity="0.8" paint-order="stroke">Messe-Schnellweg</text>
<text x="752.5" y="281" transform="rotate(70 752.5 281)" font-family="Liberation Sans" font-size="9" font-weight="normal" text-anchor="start" fill="#3a3a3a" stroke="#fff" stroke-width="2" stroke-opacity="0.8" paint-order="stroke">4. Allee</text>
<text x="763.5" y="318.5" transform="rotate(72 763.5 318.5)" font-family="Liberation Sans" font-size="9" font-weight="normal" text-anchor="start" fill="#3a3a3a" stroke="#fff" stroke-width="2" stroke-opacity="0.8" paint-order="stroke">4. Allee</text>
<text x="813.5" y="290.5" transform="rotate(78 813.5 290.5)" font-family="Liberation Sans" font-size="9" font-weight="normal" text-anchor="start" fill="#3a3a3a" stroke="#fff" stroke-width="2" stroke-opacity="0.8" paint-order="stroke">2. Allee</text>
<text x="821" y="347.5" transform="rotate(78 821 347.5)" font-family="Liberation Sans" font-size="9" font-weight="normal" text-anchor="start" fill="#3a3a3a" stroke="#fff" stroke-width="2" stroke-opacity="0.8" paint-order="stroke">2. Allee</text>
<text x="772" y="366" transform="rotate(-20 772 366)" font-family="Liberation Sans" font-size="9" font-weight="normal" text-anchor="start" fill="#3a3a3a" stroke="#fff" stroke-width="2" stroke-opacity="0.8" paint-order="stroke">Expo-Allee</text>
<text x="693.5" y="288.5" transform="rotate(71 693.5 288.5)" font-family="Liberation Sans" font-size="9" font-weight="normal" text-anchor="start" fill="#3a3a3a" stroke="#fff" stroke-width="2" stroke-opacity="0.8" paint-order="stroke">7. Allee</text>
<text x="719" y="308" transform="rotate(70 719 308)" font-family="Liberation Sans" font-size="9" font-weight="normal" text-anchor="start" fill="#3a3a3a" stroke="#fff" stroke-width="2" stroke-opacity="0.8" paint-order="stroke">6. Allee</text>
<text x="881" y="340" transform="rotate(70 881 340)" font-family="Liberation Sans" font-size="9" font-weight="normal" text-anchor="start" fill="#3a3a3a" stroke="#fff" stroke-width="2" stroke-opacity="0.8" paint-order="stroke">Expo</text>
<g fill="none" stroke-linejoin="round">
<polyline points="500.9,88.1 513.0,82.0 529.5,79.3 543.0,79.8" stroke="#fff" stroke-width="5" stroke-opacity="0.85"/><polyline points="495.4,96.9 508.6,96.3 524.0,87.5 537.2,79.8" stroke="#fff" stroke-width="5" stroke-opacity="0.85"/><polyline points="553.8,81.8 561.5,82.6" stroke="#fff" stroke-width="5" stroke-opacity="0.85"/><polyline points="574.7,83.0 576.3,97.4 577.5,112.4 581.9,119.3" stroke="#fff" stroke-width="5" stroke-opacity="0.85"/><polyline points="596.6,123.2 611.3,115.3" stroke="#fff" stroke-width="5" stroke-opacity="0.85"/><polyline points="625.0,108.5 639.8,100.6 650.6,94.2 653.5,98.6 656.5,104.5 663.3,105.0" stroke="#fff" stroke-width="5" stroke-opacity="0.85"/><polyline points="546.0,85.3 548.8,110.6" stroke="#fff" stroke-width="5" stroke-opacity="0.85"/><polyline points="551.6,121.7 553.2,130.0 557.6,143.2 565.3,158.6" stroke="#fff" stroke-width="5" stroke-opacity="0.85"/><polyline points="571.9,170.2 581.8,189.5" stroke="#fff" stroke-width="5" stroke-opacity="0.85"/><polyline points="587.3,200.5 590.0,207.0 609.0,242.4 614.6,246.8" stroke="#fff" stroke-width="5" stroke-opacity="0.85"/><polyline points="590.0,206.0 601.7,199.9" stroke="#fff" stroke-width="5" stroke-opacity="0.85"/><polyline points="613.2,193.9 621.5,188.4 616.0,179.5" stroke="#fff" stroke-width="5" stroke-opacity="0.85"/><polyline points="610.5,168.5 598.4,149.8" stroke="#fff" stroke-width="5" stroke-opacity="0.85"/><polyline points="598.6,139.9 663.3,104.5" stroke="#fff" stroke-width="5" stroke-opacity="0.85"/><polyline points="677.0,97.2 695.0,87.9 705.1,82.5" stroke="#fff" stroke-width="5" stroke-opacity="0.85"/><polyline points="705.1,82.5 718.7,76.5 733.0,69.0" stroke="#fff" stroke-width="5" stroke-opacity="0.85"/><polyline points="746.7,69.7 752.0,80.3" stroke="#fff" stroke-width="5" stroke-opacity="0.85"/><polyline points="759.6,98.4 771.7,119.6 768.0,127.0" stroke="#fff" stroke-width="5" stroke-opacity="0.85"/><polyline points="750.5,134.8 727.0,144.6 722.5,134.8" stroke="#fff" stroke-width="5" stroke-opacity="0.85"/><polyline points="718.7,121.1 711.1,103.0" stroke="#fff" stroke-width="5" stroke-opacity="0.85"/><polyline points="707.0,90.0 705.1,82.5" stroke="#fff" stroke-width="5" stroke-opacity="0.85"/><polyline points="624.6,242.4 644.6,235.7" stroke="#fff" stroke-width="5" stroke-opacity="0.85"/><polyline points="657.0,231.2 673.6,226.7 678.0,233.4 681.4,248.0" stroke="#fff" stroke-width="5" stroke-opacity="0.85"/><polyline points="684.8,260.2 707.0,331.5" stroke="#fff" stroke-width="5" stroke-opacity="0.85"/><polyline points="716.4,340.9 730.5,334.3 714.5,285.3" stroke="#fff" stroke-width="5" stroke-opacity="0.85"/><polyline points="710.7,270.2 744.7,261.8" stroke="#fff" stroke-width="5" stroke-opacity="0.85"/><polyline points="764.4,259.9 769.2,266.5" stroke="#fff" stroke-width="5" stroke-opacity="0.85"/><polyline points="788.0,258.9 807.8,236.3" stroke="#fff" stroke-width="5" stroke-opacity="0.85"/><polyline points="822.0,239.1 842.7,239.1" stroke="#fff" stroke-width="5" stroke-opacity="0.85"/><polyline points="844.5,253.3 845.5,291.0" stroke="#fff" stroke-width="5" stroke-opacity="0.85"/><polyline points="846.4,306.0 847.4,326.8" stroke="#fff" stroke-width="5" stroke-opacity="0.85"/><polyline points="848.3,340.0 849.2,365.0" stroke="#fff" stroke-width="5" stroke-opacity="0.85"/><polyline points="617.9,251.3 620.1,264.6" stroke="#fff" stroke-width="5" stroke-opacity="0.85"/><polyline points="625.7,278.0 640.2,315.9" stroke="#fff" stroke-width="5" stroke-opacity="0.85"/><polyline points="644.6,329.3 655.8,365.0" stroke="#fff" stroke-width="5" stroke-opacity="0.85"/><polyline points="710.7,270.2 714.5,285.3" stroke="#fff" stroke-width="5" stroke-opacity="0.85"/><polyline points="500.9,88.1 513.0,82.0 529.5,79.3 543.0,79.8" stroke="#6a3cf2" stroke-width="3.4" stroke-dasharray="7 4"/><polyline points="495.4,96.9 508.6,96.3 524.0,87.5 537.2,79.8" stroke="#6a3cf2" stroke-width="3.4" stroke-dasharray="7 4"/><polyline points="553.8,81.8 561.5,82.6" stroke="#6a3cf2" stroke-width="3.4" stroke-dasharray="7 4"/><polyline points="574.7,83.0 576.3,97.4 577.5,112.4 581.9,119.3" stroke="#6a3cf2" stroke-width="3.4" stroke-dasharray="7 4"/><polyline points="596.6,123.2 611.3,115.3" stroke="#6a3cf2" stroke-width="3.4" stroke-dasharray="7 4"/><polyline points="625.0,108.5 639.8,100.6 650.6,94.2 653.5,98.6 656.5,104.5 663.3,105.0" stroke="#6a3cf2" stroke-width="3.4" stroke-dasharray="7 4"/><polyline points="546.0,85.3 548.8,110.6" stroke="#6a3cf2" stroke-width="3.4"/><polyline points="551.6,121.7 553.2,130.0 557.6,143.2 565.3,158.6" stroke="#6a3cf2" stroke-width="3.4"/><polyline points="571.9,170.2 581.8,189.5" stroke="#6a3cf2" stroke-width="3.4"/><polyline points="587.3,200.5 590.0,207.0 609.0,242.4 614.6,246.8" stroke="#6a3cf2" stroke-width="3.4"/><polyline points="590.0,206.0 601.7,199.9" stroke="#6a3cf2" stroke-width="3.4"/><polyline points="613.2,193.9 621.5,188.4 616.0,179.5" stroke="#6a3cf2" stroke-width="3.4"/><polyline points="610.5,168.5 598.4,149.8" stroke="#6a3cf2" stroke-width="3.4" stroke-dasharray="7 4"/><polyline points="598.6,139.9 663.3,104.5" stroke="#6a3cf2" stroke-width="3.4"/><polyline points="677.0,97.2 695.0,87.9 705.1,82.5" stroke="#6a3cf2" stroke-width="3.4"/><polyline points="705.1,82.5 718.7,76.5 733.0,69.0" stroke="#6a3cf2" stroke-width="3.4" stroke-dasharray="7 4"/><polyline points="746.7,69.7 752.0,80.3" stroke="#6a3cf2" stroke-width="3.4" stroke-dasharray="7 4"/><polyline points="759.6,98.4 771.7,119.6 768.0,127.0" stroke="#6a3cf2" stroke-width="3.4" stroke-dasharray="7 4"/><polyline points="750.5,134.8 727.0,144.6 722.5,134.8" stroke="#6a3cf2" stroke-width="3.4"/><polyline points="718.7,121.1 711.1,103.0" stroke="#6a3cf2" stroke-width="3.4"/><polyline points="707.0,90.0 705.1,82.5" stroke="#6a3cf2" stroke-width="3.4"/><polyline points="624.6,242.4 644.6,235.7" stroke="#6a3cf2" stroke-width="3.4" stroke-dasharray="7 4"/><polyline points="657.0,231.2 673.6,226.7 678.0,233.4 681.4,248.0" stroke="#6a3cf2" stroke-width="3.4"/><polyline points="684.8,260.2 707.0,331.5" stroke="#6a3cf2" stroke-width="3.4"/><polyline points="716.4,340.9 730.5,334.3 714.5,285.3" stroke="#6a3cf2" stroke-width="3.4"/><polyline points="710.7,270.2 744.7,261.8" stroke="#6a3cf2" stroke-width="3.4"/><polyline points="764.4,259.9 769.2,266.5" stroke="#6a3cf2" stroke-width="3.4" stroke-dasharray="7 4"/><polyline points="788.0,258.9 807.8,236.3" stroke="#6a3cf2" stroke-width="3.4" stroke-dasharray="7 4"/><polyline points="822.0,239.1 842.7,239.1" stroke="#6a3cf2" stroke-width="3.4" stroke-dasharray="7 4"/><polyline points="844.5,253.3 845.5,291.0" stroke="#6a3cf2" stroke-width="3.4" stroke-dasharray="7 4"/><polyline points="846.4,306.0 847.4,326.8" stroke="#6a3cf2" stroke-width="3.4" stroke-dasharray="7 4"/><polyline points="848.3,340.0 849.2,365.0" stroke="#6a3cf2" stroke-width="3.4" stroke-dasharray="7 4"/><polyline points="617.9,251.3 620.1,264.6" stroke="#6a3cf2" stroke-width="3.4"/><polyline points="625.7,278.0 640.2,315.9" stroke="#6a3cf2" stroke-width="3.4" stroke-dasharray="7 4"/><polyline points="644.6,329.3 655.8,365.0" stroke="#6a3cf2" stroke-width="3.4" stroke-dasharray="7 4"/><polyline points="710.7,270.2 714.5,285.3" stroke="#6a3cf2" stroke-width="3.4"/>
</g>
<path d="M490.4,83.0 L492.9,97.6 L496.9,92.8 L503.3,91.7 Z" fill="#6a3cf2" stroke="#fff" stroke-width="1" stroke-linejoin="round"/><path d="M555.9,81.7 L542.2,74.5 L544.4,80.7 L542.2,86.6 Z" fill="#6a3cf2" stroke="#fff" stroke-width="1" stroke-linejoin="round"/><path d="M559.2,82.5 L574.9,77.5 L571.8,82.8 L573.5,88.3 Z" fill="#6a3cf2" stroke="#fff" stroke-width="1" stroke-linejoin="round"/><path d="M579.6,118.9 L595.5,118.9 L592.2,123.4 L593.6,129.8 Z" fill="#6a3cf2" stroke="#fff" stroke-width="1" stroke-linejoin="round"/><path d="M611.9,115.2 L621.4,104.4 L622.3,110.2 L627.1,114.0 Z" fill="#6a3cf2" stroke="#fff" stroke-width="1" stroke-linejoin="round"/><path d="M551.9,123.8 L543.4,110.8 L550.1,112.3 L556.2,109.4 Z" fill="#6a3cf2" stroke="#fff" stroke-width="1" stroke-linejoin="round"/><path d="M572.9,172.1 L561.5,162.7 L567.5,161.8 L571.5,157.0 Z" fill="#6a3cf2" stroke="#fff" stroke-width="1" stroke-linejoin="round"/><path d="M588.3,202.3 L576.9,193.7 L582.9,192.7 L586.9,188.0 Z" fill="#6a3cf2" stroke="#fff" stroke-width="1" stroke-linejoin="round"/><path d="M615.1,192.9 L600.1,195.6 L604.9,198.4 L605.7,203.4 Z" fill="#6a3cf2" stroke="#fff" stroke-width="1" stroke-linejoin="round"/><path d="M609.9,167.0 L608.5,178.4 L613.2,175.4 L619.1,175.5 Z" fill="#6a3cf2" stroke="#fff" stroke-width="1" stroke-linejoin="round"/><path d="M590.1,136.8 L591.4,148.9 L596.2,145.6 L603.5,145.8 Z" fill="#6a3cf2" stroke="#fff" stroke-width="1" stroke-linejoin="round"/><path d="M678.6,97.5 L662.6,99.5 L667.6,103.5 L668.4,109.7 Z" fill="#6a3cf2" stroke="#fff" stroke-width="1" stroke-linejoin="round"/><path d="M731.7,69.0 L743.6,59.1 L743.3,64.8 L747.5,69.0 Z" fill="#6a3cf2" stroke="#fff" stroke-width="1" stroke-linejoin="round"/><path d="M753.4,83.9 L754.3,97.6 L758.3,93.4 L764.2,92.7 Z" fill="#6a3cf2" stroke="#fff" stroke-width="1" stroke-linejoin="round"/><path d="M765.1,126.5 L751.3,132.3 L756.0,134.7 L757.1,140.2 Z" fill="#6a3cf2" stroke="#fff" stroke-width="1" stroke-linejoin="round"/><path d="M724.8,136.1 L714.0,123.4 L720.3,124.6 L724.8,121.4 Z" fill="#6a3cf2" stroke="#fff" stroke-width="1" stroke-linejoin="round"/><path d="M713.6,104.2 L701.9,92.4 L708.3,93.1 L712.7,89.5 Z" fill="#6a3cf2" stroke="#fff" stroke-width="1" stroke-linejoin="round"/><path d="M613.1,248.8 L625.3,238.4 L624.6,244.4 L628.2,248.8 Z" fill="#6a3cf2" stroke="#fff" stroke-width="1" stroke-linejoin="round"/><path d="M642.2,234.9 L656.8,227.7 L655.1,233.1 L658.2,237.8 Z" fill="#6a3cf2" stroke="#fff" stroke-width="1" stroke-linejoin="round"/><path d="M682.6,248.3 L679.1,261.3 L684.6,258.6 L690.7,259.8 Z" fill="#6a3cf2" stroke="#fff" stroke-width="1" stroke-linejoin="round"/><path d="M710.3,331.8 L704.6,344.9 L710.9,342.2 L717.6,343.5 Z" fill="#6a3cf2" stroke="#fff" stroke-width="1" stroke-linejoin="round"/><path d="M713.7,284.1 L707.5,273.1 L713.1,275.4 L718.5,274.4 Z" fill="#6a3cf2" stroke="#fff" stroke-width="1" stroke-linejoin="round"/><path d="M749.2,260.4 L761.5,253.0 L760.5,257.8 L763.9,261.6 Z" fill="#6a3cf2" stroke="#fff" stroke-width="1" stroke-linejoin="round"/><path d="M772.5,265.5 L787.2,260.7 L784.9,265.5 L787.2,270.4 Z" fill="#6a3cf2" stroke="#fff" stroke-width="1" stroke-linejoin="round"/><path d="M807.5,239.1 L820.9,234.3 L819.3,239.1 L822.2,244.0 Z" fill="#6a3cf2" stroke="#fff" stroke-width="1" stroke-linejoin="round"/><path d="M844.5,238.9 L838.4,252.4 L844.5,250.3 L850.7,252.4 Z" fill="#6a3cf2" stroke="#fff" stroke-width="1" stroke-linejoin="round"/><path d="M846.4,291.7 L841.6,305.2 L846.4,303.1 L851.3,305.2 Z" fill="#6a3cf2" stroke="#fff" stroke-width="1" stroke-linejoin="round"/><path d="M848.4,326.8 L842.3,338.9 L847.9,337.0 L853.2,338.9 Z" fill="#6a3cf2" stroke="#fff" stroke-width="1" stroke-linejoin="round"/><path d="M623.7,277.7 L616.4,266.1 L622.5,267.4 L628.0,264.7 Z" fill="#6a3cf2" stroke="#fff" stroke-width="1" stroke-linejoin="round"/><path d="M644.0,327.9 L633.9,316.2 L641.0,317.5 L647.0,314.8 Z" fill="#6a3cf2" stroke="#fff" stroke-width="1" stroke-linejoin="round"/>
<g stroke="#111" stroke-width="2" fill="none"><path d="M400.7 290 V332 M400.7 311 H454.6 V332 M435.9 290 V311"/></g>
<text x="404" y="303.2" font-family="Liberation Sans" font-size="9.6" font-weight="bold" fill="#333">200 m</text>
<text x="411.5" y="325.2" font-family="Liberation Sans" font-size="9.6" font-weight="bold" fill="#333">1000 ft</text>
<text x="399" y="345.3" font-family="Liberation Sans" font-size="10" font-weight="bold" fill="#2f2f2f" letter-spacing="-0.28">© OpenStreetMap contributors</text>
<text x="855.7" y="344.5" font-family="Liberation Sans" font-size="10" font-weight="bold" fill="#2f2f2f" letter-spacing="-0.1">N 52° 19.4757' : E 009° 48.5788'</text>
</svg>
<div class="a" style="left:0;top:0;width:8px;height:327px;background:linear-gradient(to right,rgba(0,0,0,.13),rgba(0,0,0,0))"></div>
<div class="a" style="left:0;top:0;width:625px;height:4px;background:linear-gradient(to bottom,rgba(0,0,0,.10),rgba(0,0,0,0))"></div>

</div>

<!-- TOOLBAR -->
<div class="a" style="left:387px;top:365px;width:625px;height:37px;background:#fff;border-bottom:1px solid #e2e2e2"></div>
<div class="a" style="left:444px;top:369px;width:42px;height:28px;background:#f5f5f5;border:1px solid #dcdcdc;border-radius:4px"></div>
<div class="t" style="left:459px;top:373px;color:#aaa">1</div>
<div class="t" style="left:495px;top:373px">of 1</div>
<div class="t" style="left:572px;top:373px">Items from 1 to 36 of 36</div>
<div class="sel" style="left:731px;top:369px;width:63px;height:28px"></div>
<div class="t" style="left:739px;top:373px">50</div>
<div class="sel" style="left:922px;top:369px;width:78px;height:28px"></div>
<div class="t" style="left:931px;top:373px">Export</div>

<!-- TABLE -->

<!-- FOOTER -->
<div class="a" style="left:2px;top:688px;width:1010px;height:37px;background:#efefef;border-top:1px solid #dfe1e4"></div>
<div class="t" style="left:389px;top:698px;color:#555">© Gurtam</div>
<div class="t" style="left:905px;top:698px;color:#555">10:41:22 (+02)</div>


<div class="a" style="left:2px;top:393px;width:385px;height:174px;background:#ebebeb"></div>
<div class="a" style="left:2px;top:422px;width:385px;height:1px;background:#e0e0e0"></div>
<div class="t" style="left:14px;top:399px;font-size:14px;line-height:16px;color:#333;">Fuel fillings</div>
<svg style="left:358px;top:402px" width="16" height="14" viewBox="0 0 16 14"><rect x="0.75" y="0.75" width="14.5" height="12.5" rx="1.3" fill="none" stroke="#0e1626" stroke-width="1.5"/><rect x="1" y="1" width="14" height="2" fill="#0e1626"/><line x1="1" y1="7.5" x2="15" y2="7.5" stroke="#0e1626" stroke-width="1"/></svg>
<div class="a" style="left:2px;top:451px;width:385px;height:1px;background:#e0e0e0"></div>
<div class="t" style="left:14px;top:428px;font-size:14px;line-height:16px;color:#333;">Fuel thefts</div>
<svg style="left:358px;top:431px" width="16" height="14" viewBox="0 0 16 14"><rect x="0.75" y="0.75" width="14.5" height="12.5" rx="1.3" fill="none" stroke="#0e1626" stroke-width="1.5"/><rect x="1" y="1" width="14" height="2" fill="#0e1626"/><line x1="1" y1="7.5" x2="15" y2="7.5" stroke="#0e1626" stroke-width="1"/></svg>
<div class="a" style="left:2px;top:480px;width:385px;height:1px;background:#e0e0e0"></div>
<div class="t" style="left:14px;top:457px;font-size:14px;line-height:16px;color:#333;">Eco driving</div>
<svg style="left:358px;top:460px" width="16" height="14" viewBox="0 0 16 14"><rect x="0.75" y="0.75" width="14.5" height="12.5" rx="1.3" fill="none" stroke="#0e1626" stroke-width="1.5"/><rect x="1" y="1" width="14" height="2" fill="#0e1626"/><line x1="1" y1="7.5" x2="15" y2="7.5" stroke="#0e1626" stroke-width="1"/></svg>
<div class="a" style="left:2px;top:509px;width:385px;height:1px;background:#e0e0e0"></div>
<div class="t" style="left:14px;top:486px;font-size:14px;line-height:16px;color:#333;">Engine hours</div>
<svg style="left:358px;top:489px" width="16" height="14" viewBox="0 0 16 14"><rect x="0.75" y="0.75" width="14.5" height="12.5" rx="1.3" fill="none" stroke="#0e1626" stroke-width="1.5"/><rect x="1" y="1" width="14" height="2" fill="#0e1626"/><line x1="1" y1="7.5" x2="15" y2="7.5" stroke="#0e1626" stroke-width="1"/></svg>
<div class="a" style="left:2px;top:538px;width:385px;height:1px;background:#d2d2d2"></div>
<div class="t" style="left:14px;top:515px;font-size:14px;line-height:16px;color:#333;">Speed chart</div>
<svg style="left:358px;top:518px" width="16" height="14" viewBox="0 0 16 14"><rect x="0.75" y="0.75" width="14.5" height="12.5" rx="1.3" fill="none" stroke="#0e1626" stroke-width="1.5"/><rect x="1" y="1" width="14" height="2" fill="#0e1626"/><line x1="1" y1="7.5" x2="15" y2="7.5" stroke="#0e1626" stroke-width="1"/></svg>
<div class="a" style="left:2px;top:567px;width:385px;height:1px;background:#d2d2d2"></div>
<div class="t" style="left:14px;top:544px;font-size:14px;line-height:16px;color:#333;">Mileage chart</div>
<svg style="left:358px;top:547px" width="16" height="14" viewBox="0 0 16 14"><rect x="0.75" y="0.75" width="14.5" height="12.5" rx="1.3" fill="none" stroke="#0e1626" stroke-width="1.5"/><rect x="1" y="1" width="14" height="2" fill="#0e1626"/><line x1="1" y1="7.5" x2="15" y2="7.5" stroke="#0e1626" stroke-width="1"/></svg>
<div class="a" style="left:387px;top:402px;width:623px;height:28px;background:#f4f4f4;border-bottom:1px solid #dedede"></div>
<div class="t" style="left:429.5px;top:407px;font-size:14px;line-height:16px;color:#2b2f3a;">Beginning</div>
<div class="t" style="left:575.5px;top:407px;font-size:14px;line-height:16px;color:#2b2f3a;">End</div>
<div class="t" style="left:721.5px;top:407px;font-size:14px;line-height:16px;color:#2b2f3a;">Duration</div>
<div class="t" style="left:792.5px;top:407px;font-size:14px;line-height:16px;color:#2b2f3a;">Mileage</div>
<div class="t" style="left:860.5px;top:407px;font-size:14px;line-height:16px;color:#2b2f3a;">Avg speed</div>
<div class="a" style="left:387px;top:458.2px;width:549px;height:1px;background:#e3e3e3"></div>
<div class="t" style="left:430px;top:436px;font-size:14px;line-height:16px;color:#cc2fcc;letter-spacing:-0.16px">2023-04-18 00:00:27</div>
<div class="t" style="left:575.5px;top:436px;font-size:14px;line-height:16px;color:#cc2fcc;letter-spacing:-0.16px">2023-04-18 00:04:12</div>
<div class="t" style="left:722px;top:436px;font-size:14px;line-height:16px;color:#3a3d45;letter-spacing:-0.1px">0:03:45</div>
<div class="t" style="left:793px;top:436px;font-size:14px;line-height:16px;color:#3a3d45;">0.13 km</div>
<div class="t" style="left:861px;top:436px;font-size:14px;line-height:16px;color:#3a3d45;letter-spacing:0.2px">17 km/h</div>
<svg style="left:394px;top:434.0px" width="20" height="20" viewBox="0 0 20 20"><path d="M3.9 3 L8.1 5.9 L3.9 8.8 Z" fill="#1b2130"/><path d="M10.2 6.1 H14.2 A2.35 2.35 0 0 1 14.2 10.8 H7.6 A2.5 2.5 0 0 0 7.6 15.8 H11.2" fill="none" stroke="#232938" stroke-width="1.25"/><rect x="13.2" y="14.1" width="3.6" height="3.6" fill="#1b2130"/></svg>
<div class="a" style="left:387px;top:486.8px;width:549px;height:1px;background:#e3e3e3"></div>
<div class="t" style="left:430px;top:464px;font-size:14px;line-height:16px;color:#cc2fcc;letter-spacing:-0.16px">2023-04-18 00:04:27</div>
<div class="t" style="left:575.5px;top:464px;font-size:14px;line-height:16px;color:#cc2fcc;letter-spacing:-0.16px">2023-04-18 00:13:57</div>
<div class="t" style="left:722px;top:464px;font-size:14px;line-height:16px;color:#3a3d45;letter-spacing:-0.1px">0:09:30</div>
<div class="t" style="left:793px;top:464px;font-size:14px;line-height:16px;color:#3a3d45;">0.18 km</div>
<div class="t" style="left:861px;top:464px;font-size:14px;line-height:16px;color:#3a3d45;letter-spacing:0.2px">16 km/h</div>
<svg style="left:394px;top:462.7px" width="20" height="20" viewBox="0 0 20 20"><path d="M3.9 3 L8.1 5.9 L3.9 8.8 Z" fill="#1b2130"/><path d="M10.2 6.1 H14.2 A2.35 2.35 0 0 1 14.2 10.8 H7.6 A2.5 2.5 0 0 0 7.6 15.8 H11.2" fill="none" stroke="#232938" stroke-width="1.25"/><rect x="13.2" y="14.1" width="3.6" height="3.6" fill="#1b2130"/></svg>
<div class="a" style="left:387px;top:515.5px;width:549px;height:1px;background:#e3e3e3"></div>
<div class="t" style="left:430px;top:493px;font-size:14px;line-height:16px;color:#cc2fcc;letter-spacing:-0.16px">2023-04-18 00:16:42</div>
<div class="t" style="left:575.5px;top:493px;font-size:14px;line-height:16px;color:#cc2fcc;letter-spacing:-0.16px">2023-04-18 00:34:27</div>
<div class="t" style="left:722px;top:493px;font-size:14px;line-height:16px;color:#3a3d45;letter-spacing:-0.1px">0:17:45</div>
<div class="t" style="left:793px;top:493px;font-size:14px;line-height:16px;color:#3a3d45;">3.71 km</div>
<div class="t" style="left:861px;top:493px;font-size:14px;line-height:16px;color:#3a3d45;letter-spacing:0.2px">14 km/h</div>
<svg style="left:394px;top:491.3px" width="20" height="20" viewBox="0 0 20 20"><path d="M3.9 3 L8.1 5.9 L3.9 8.8 Z" fill="#1b2130"/><path d="M10.2 6.1 H14.2 A2.35 2.35 0 0 1 14.2 10.8 H7.6 A2.5 2.5 0 0 0 7.6 15.8 H11.2" fill="none" stroke="#232938" stroke-width="1.25"/><rect x="13.2" y="14.1" width="3.6" height="3.6" fill="#1b2130"/></svg>
<div class="a" style="left:387px;top:544.2px;width:549px;height:1px;background:#e3e3e3"></div>
<div class="t" style="left:430px;top:522px;font-size:14px;line-height:16px;color:#cc2fcc;letter-spacing:-0.16px">2023-04-18 00:47:57</div>
<div class="t" style="left:575.5px;top:522px;font-size:14px;line-height:16px;color:#cc2fcc;letter-spacing:-0.16px">2023-04-18 00:58:57</div>
<div class="t" style="left:722px;top:522px;font-size:14px;line-height:16px;color:#3a3d45;letter-spacing:-0.1px">0:11:00</div>
<div class="t" style="left:793px;top:522px;font-size:14px;line-height:16px;color:#3a3d45;">1.32 km</div>
<div class="t" style="left:861px;top:522px;font-size:14px;line-height:16px;color:#3a3d45;letter-spacing:0.2px">14 km/h</div>
<svg style="left:394px;top:520.0px" width="20" height="20" viewBox="0 0 20 20"><path d="M3.9 3 L8.1 5.9 L3.9 8.8 Z" fill="#1b2130"/><path d="M10.2 6.1 H14.2 A2.35 2.35 0 0 1 14.2 10.8 H7.6 A2.5 2.5 0 0 0 7.6 15.8 H11.2" fill="none" stroke="#232938" stroke-width="1.25"/><rect x="13.2" y="14.1" width="3.6" height="3.6" fill="#1b2130"/></svg>
<div class="a" style="left:387px;top:572.9px;width:549px;height:1px;background:#e3e3e3"></div>
<div class="t" style="left:430px;top:550px;font-size:14px;line-height:16px;color:#cc2fcc;letter-spacing:-0.16px">2023-04-18 00:59:12</div>
<div class="t" style="left:575.5px;top:550px;font-size:14px;line-height:16px;color:#cc2fcc;letter-spacing:-0.16px">2023-04-18 01:08:42</div>
<div class="t" style="left:722px;top:550px;font-size:14px;line-height:16px;color:#3a3d45;letter-spacing:-0.1px">0:09:30</div>
<div class="t" style="left:793px;top:550px;font-size:14px;line-height:16px;color:#3a3d45;">0.18 km</div>
<div class="t" style="left:861px;top:550px;font-size:14px;line-height:16px;color:#3a3d45;letter-spacing:0.2px">16 km/h</div>
<svg style="left:394px;top:548.7px" width="20" height="20" viewBox="0 0 20 20"><path d="M3.9 3 L8.1 5.9 L3.9 8.8 Z" fill="#1b2130"/><path d="M10.2 6.1 H14.2 A2.35 2.35 0 0 1 14.2 10.8 H7.6 A2.5 2.5 0 0 0 7.6 15.8 H11.2" fill="none" stroke="#232938" stroke-width="1.25"/><rect x="13.2" y="14.1" width="3.6" height="3.6" fill="#1b2130"/></svg>
<div class="a" style="left:387px;top:601.5px;width:549px;height:1px;background:#e3e3e3"></div>
<div class="t" style="left:430px;top:579px;font-size:14px;line-height:16px;color:#cc2fcc;letter-spacing:-0.16px">2023-04-18 01:11:27</div>
<div class="t" style="left:575.5px;top:579px;font-size:14px;line-height:16px;color:#cc2fcc;letter-spacing:-0.16px">2023-04-18 01:29:12</div>
<div class="t" style="left:722px;top:579px;font-size:14px;line-height:16px;color:#3a3d45;letter-spacing:-0.1px">0:17:45</div>
<div class="t" style="left:793px;top:579px;font-size:14px;line-height:16px;color:#3a3d45;">3.71 km</div>
<div class="t" style="left:861px;top:579px;font-size:14px;line-height:16px;color:#3a3d45;letter-spacing:0.2px">14 km/h</div>
<svg style="left:394px;top:577.4px" width="20" height="20" viewBox="0 0 20 20"><path d="M3.9 3 L8.1 5.9 L3.9 8.8 Z" fill="#1b2130"/><path d="M10.2 6.1 H14.2 A2.35 2.35 0 0 1 14.2 10.8 H7.6 A2.5 2.5 0 0 0 7.6 15.8 H11.2" fill="none" stroke="#232938" stroke-width="1.25"/><rect x="13.2" y="14.1" width="3.6" height="3.6" fill="#1b2130"/></svg>
<div class="a" style="left:387px;top:630.2px;width:549px;height:1px;background:#e3e3e3"></div>
<div class="t" style="left:430px;top:608px;font-size:14px;line-height:16px;color:#cc2fcc;letter-spacing:-0.16px">2023-04-18 01:42:42</div>
<div class="t" style="left:575.5px;top:608px;font-size:14px;line-height:16px;color:#cc2fcc;letter-spacing:-0.16px">2023-04-18 01:53:42</div>
<div class="t" style="left:722px;top:608px;font-size:14px;line-height:16px;color:#3a3d45;letter-spacing:-0.1px">0:11:00</div>
<div class="t" style="left:793px;top:608px;font-size:14px;line-height:16px;color:#3a3d45;">1.32 km</div>
<div class="t" style="left:861px;top:608px;font-size:14px;line-height:16px;color:#3a3d45;letter-spacing:0.2px">14 km/h</div>
<svg style="left:394px;top:606.0px" width="20" height="20" viewBox="0 0 20 20"><path d="M3.9 3 L8.1 5.9 L3.9 8.8 Z" fill="#1b2130"/><path d="M10.2 6.1 H14.2 A2.35 2.35 0 0 1 14.2 10.8 H7.6 A2.5 2.5 0 0 0 7.6 15.8 H11.2" fill="none" stroke="#232938" stroke-width="1.25"/><rect x="13.2" y="14.1" width="3.6" height="3.6" fill="#1b2130"/></svg>
<div class="a" style="left:387px;top:658.9px;width:549px;height:1px;background:#e3e3e3"></div>
<div class="t" style="left:430px;top:636px;font-size:14px;line-height:16px;color:#cc2fcc;letter-spacing:-0.16px">2023-04-18 01:53:57</div>
<div class="t" style="left:575.5px;top:636px;font-size:14px;line-height:16px;color:#cc2fcc;letter-spacing:-0.16px">2023-04-18 02:03:27</div>
<div class="t" style="left:722px;top:636px;font-size:14px;line-height:16px;color:#3a3d45;letter-spacing:-0.1px">0:09:30</div>
<div class="t" style="left:793px;top:636px;font-size:14px;line-height:16px;color:#3a3d45;">0.18 km</div>
<div class="t" style="left:861px;top:636px;font-size:14px;line-height:16px;color:#3a3d45;letter-spacing:0.2px">16 km/h</div>
<svg style="left:394px;top:634.7px" width="20" height="20" viewBox="0 0 20 20"><path d="M3.9 3 L8.1 5.9 L3.9 8.8 Z" fill="#1b2130"/><path d="M10.2 6.1 H14.2 A2.35 2.35 0 0 1 14.2 10.8 H7.6 A2.5 2.5 0 0 0 7.6 15.8 H11.2" fill="none" stroke="#232938" stroke-width="1.25"/><rect x="13.2" y="14.1" width="3.6" height="3.6" fill="#1b2130"/></svg>
<div class="a" style="left:387px;top:687.5px;width:549px;height:1px;background:#e3e3e3"></div>
<div class="t" style="left:430px;top:665px;font-size:14px;line-height:16px;color:#cc2fcc;letter-spacing:-0.16px">2023-04-18 02:06:12</div>
<div class="t" style="left:575.5px;top:665px;font-size:14px;line-height:16px;color:#cc2fcc;letter-spacing:-0.16px">2023-04-18 02:23:57</div>
<div class="t" style="left:722px;top:665px;font-size:14px;line-height:16px;color:#3a3d45;letter-spacing:-0.1px">0:17:45</div>
<div class="t" style="left:793px;top:665px;font-size:14px;line-height:16px;color:#3a3d45;">3.71 km</div>
<div class="t" style="left:861px;top:665px;font-size:14px;line-height:16px;color:#3a3d45;letter-spacing:0.2px">14 km/h</div>
<svg style="left:394px;top:663.4px" width="20" height="20" viewBox="0 0 20 20"><path d="M3.9 3 L8.1 5.9 L3.9 8.8 Z" fill="#1b2130"/><path d="M10.2 6.1 H14.2 A2.35 2.35 0 0 1 14.2 10.8 H7.6 A2.5 2.5 0 0 0 7.6 15.8 H11.2" fill="none" stroke="#232938" stroke-width="1.25"/><rect x="13.2" y="14.1" width="3.6" height="3.6" fill="#1b2130"/></svg>
<div class="a" style="left:387.0px;top:402px;width:1px;height:286px;background:#e0e0e0"></div>
<div class="a" style="left:421.0px;top:402px;width:1px;height:286px;background:#e0e0e0"></div>
<div class="a" style="left:567.0px;top:402px;width:1px;height:286px;background:#e0e0e0"></div>
<div class="a" style="left:713.0px;top:402px;width:1px;height:286px;background:#e0e0e0"></div>
<div class="a" style="left:784.0px;top:402px;width:1px;height:286px;background:#e0e0e0"></div>
<div class="a" style="left:852.0px;top:402px;width:1px;height:286px;background:#e0e0e0"></div>
<div class="a" style="left:935.0px;top:402px;width:1px;height:286px;background:#e0e0e0"></div>
<div class="a" style="left:993px;top:430px;width:17px;height:258px;background:#f1f1f1"></div>
<div class="a" style="left:995.5px;top:448px;width:12px;height:57px;background:#c1c1c1"></div>
<svg style="left:997px;top:436px" width="9" height="6"><path d="M0.5 5 L4.5 1 L8.5 5 Z" fill="#a3a3a3"/></svg>
<svg style="left:997px;top:678px" width="9" height="6"><path d="M0.5 1 L4.5 5 L8.5 1 Z" fill="#505050"/></svg>
<!-- LOGO -->
<svg style="left:0;top:0" width="230" height="38" viewBox="0 0 230 38">
<path d="M43.1 7.3 C43.1 5.8 41.8 5 40.5 5.1 C36 5.5 31.5 8.5 29 12.5 C27 15.8 26.3 20 26.7 25.2 C27.2 21.5 28.5 17.5 31.5 14.5 C34 12 37 10.8 41 9.6 C42.3 9.2 43.1 8.5 43.1 7.3 Z" fill="#f42d52"/>
<path d="M28 26.6 C27.8 28.5 29.5 30.5 31.5 31.6 C35 33.6 39.5 34.3 43.5 33.8 C47 33.3 50 32 51.9 30.2 C48.5 30.8 44 30.8 40 29.6 C36.5 28.5 34.5 26.8 32.5 25.3 C30.8 24 28.2 24.5 28 26.6 Z" fill="#f42d52"/>
<path d="M43.5 5 C48.5 7 52.5 11 54.5 16.5 C55.8 20.5 55.8 24.5 54.3 27.3 C53.3 29.2 50.7 29.3 49.8 27.5 C49.2 26.3 49.4 24.5 49.8 22.5 C50.8 18 50.3 14 48.5 11 C47.2 8.6 45.5 6.6 43.5 5 Z" fill="#2858b3"/>
<g fill="none" stroke="#1b1b1d" stroke-width="2.2" stroke-linecap="butt">
<path d="M65.8 16.2 V23.85 A5.15 5.15 0 0 0 76.1 23.85 V16.2 M76.1 23.85 A5.15 5.15 0 0 0 86.4 23.85 V16.2"/>
<path d="M91.9 16 V30"/>
<path d="M98 24.5 V21.7 A4.4 4.4 0 0 1 106.8 21.7 V30 M102.2 24.2 V30"/>
<path d="M112.5 11.8 V30"/>
<circle cx="122.4" cy="23.2" r="5.1"/>
<path d="M132.2 30 V22.6 A5.4 5.4 0 0 1 143 22.6 V30"/>
</g>
<rect x="90.8" y="11.4" width="2.2" height="2.8" fill="#1b1b1d"/>
<g fill="none" stroke="#1f56b4" stroke-width="1.85" stroke-linecap="round">
<path d="M149 11.9 V26.4 Q149.2 29.3 152.4 29.6"/>
<circle cx="161" cy="23" r="5.75"/>
<path d="M177.2 18 A5.75 5.75 0 1 0 177.6 28.2"/>
<circle cx="186.4" cy="23" r="5.75"/>
<path d="M192.6 16.6 V26.6 Q192.8 29.3 196.6 29.6"/>
<path d="M199.3 12.2 V26.8 Q199.5 29.4 203 29.7"/>
<path d="M206.8 7.6 A4.3 4.3 0 0 1 211.3 11.8" stroke-width="1.9"/>
</g>
<circle cx="207.4" cy="11.9" r="1.25" fill="#1f56b4"/>
</svg>

<!-- GLOBE -->
<svg style="left:245px;top:11px" width="18" height="18" viewBox="0 0 18 18">
<circle cx="9.05" cy="8.9" r="7.5" fill="none" stroke="#4a4a4a" stroke-width="1.1"/>
<path d="M1.95 6.6 L2.6 4.3 L5.25 2.3 L9.5 3.3 L8.2 4.9 L5.9 6.9 L3.6 7.2 Z" fill="#4a4a4a"/>
<path d="M2.9 6.9 L6.6 8.9" stroke="#4a4a4a" stroke-width="0.7"/>
<path d="M6.2 9.5 L8.55 9.9 L10.2 11.5 L7.9 14.2 L7.2 15 L6.6 12.5 L6.1 10.5 Z" fill="#4a4a4a"/>
<path d="M12.8 4.9 L14.5 4.9 L16.1 6.6 L16.4 9.5 L15.5 12.5 L14.2 12.8 L13.2 9.5 L11.5 8.2 L12.2 6.6 Z" fill="#4a4a4a"/>
</svg>

<!-- MESSAGES ICON -->
<svg style="left:351px;top:12px" width="15" height="16" viewBox="0 0 15 16">
<rect x="0.55" y="0.6" width="13.4" height="14.8" fill="none" stroke="#4a4a4a" stroke-width="1.1"/>
<rect x="0.5" y="0.5" width="13.5" height="3" fill="#4a4a4a"/>
<rect x="11" y="1.1" width="2.2" height="1.8" fill="#fff"/>
<path d="M3.4 7.4 H11 M3.4 11.4 H11" stroke="#4a4a4a" stroke-width="1.1"/>
</svg>

<!-- REPORTS ICON -->
<svg style="left:452px;top:12px" width="16" height="17" viewBox="0 0 16 17">
<path d="M0.7 2.2 H3 V0.7 H12.3 V2.2 H14.6 V15.3 H0.7 Z" fill="none" stroke="#fff" stroke-width="1.3"/>
<rect x="3.8" y="10.6" width="2" height="2.7" fill="#fff"/>
<rect x="6.7" y="8.1" width="2" height="5.2" fill="#fff"/>
<rect x="9.6" y="9.4" width="2" height="3.9" fill="#fff"/>
</svg>

<!-- GRID ICON -->
<svg style="left:864px;top:12px" width="16" height="16" viewBox="0 0 16 16" fill="#3b3b3b">
<path fill-rule="evenodd" d="M0 0h4v4h-4z M1 1v2h2v-2z M6 0h4v4h-4z M7 1v2h2v-2z"/>
<rect x="12" y="0" width="4" height="4"/>
<rect x="0" y="6" width="4" height="4"/>
<path fill-rule="evenodd" d="M6 6h4v4h-4z M7 7v2h2v-2z M12 6h4v4h-4z M13 7v2h2v-2z"/>
<rect x="0" y="12" width="4" height="4"/><rect x="6" y="12" width="4" height="4"/>
<path fill-rule="evenodd" d="M12 12h4v4h-4z M13 13v2h2v-2z"/>
</svg>
<!-- KEBAB -->
<svg style="left:903px;top:12px" width="6" height="16" viewBox="0 0 6 16" fill="#3b3b3b">
<circle cx="3" cy="3.4" r="1.5"/><circle cx="3" cy="7.9" r="1.5"/><circle cx="3" cy="12.4" r="1.5"/>
</svg>
<!-- USER ICON -->
<svg style="left:932px;top:10px" width="17" height="21" viewBox="0 0 17 21">
<ellipse cx="8" cy="6.1" rx="3.5" ry="3.7" fill="none" stroke="#3b3b3b" stroke-width="1.3"/>
<path d="M6.3 10.4 L5.6 11.2 C3.2 11.9 1.7 13.8 1.3 17.6 M9.7 10.4 L10.4 11.2 C12.8 11.9 14.3 13.8 14.8 17.6" fill="none" stroke="#3b3b3b" stroke-width="1.3"/>
<path d="M4 17.2 H9" stroke="#3b3b3b" stroke-width="1.9"/>
<path d="M8.3 15.2 L11.5 17.2 L8.3 19.2 Z" fill="#3b3b3b"/>
</svg>
<!-- FORM CHEVRONS -->
<svg style="left:0;top:0" width="1014" height="727" viewBox="0 0 1014 727">
<g fill="none" stroke="#2b3240" stroke-width="1.5">
<path d="M316.5 61.8 L321 66.2 L325.5 61.8"/>
<path d="M316.5 97.8 L321 102.2 L325.5 97.8"/>
<path d="M352.5 169.8 L357 174.2 L361.5 169.8"/>
<path d="M361.5 317.8 L366 322.2 L370.5 317.8" stroke="#222"/>
<path d="M361.5 351.2 L366 346.8 L370.5 351.2" stroke="#fff" stroke-width="1.7"/>
<path d="M772.5 380.8 L777 385.2 L781.5 380.8" stroke="#333"/>
<path d="M981.5 380.8 L986 385.2 L990.5 380.8" stroke="#333"/>
</g>
<g fill="none" stroke="#b3b6bd" stroke-width="1.6">
<path d="M408.5 379 L403.5 384 L408.5 389 M414.5 379 L409.5 384 L414.5 389"/>
<path d="M430 379 L425 384 L430 389"/>
<path d="M533 379 L538 384 L533 389"/>
<path d="M548.5 379 L553.5 384 L548.5 389 M554.5 379 L559.5 384 L554.5 389"/>
</g>
<!-- wrenches -->
<g fill="#2d3442">
<path d="M356.3 60.2 A3 3 0 0 0 360.2 64.4 L365 69.2 A1.1 1.1 0 0 0 366.4 67.8 L361.6 63 A3 3 0 0 0 357.6 59 L359.4 60.8 L358.6 62.6 L357.8 61.8 Z"/>
<path d="M356.3 96.2 A3 3 0 0 0 360.2 100.4 L365 105.2 A1.1 1.1 0 0 0 366.4 103.8 L361.6 99 A3 3 0 0 0 357.6 95 L359.4 96.8 L358.6 98.6 L357.8 97.8 Z"/>
</g>
<!-- print -->
<g fill="none" stroke="#5a606c" stroke-width="1.4">
<rect x="894.3" y="375.6" width="10.4" height="4.6"/>
<path d="M894 388 H892 A0.8 0.8 0 0 1 891.4 387.2 V381.4 A0.8 0.8 0 0 1 892.2 380.6 H906.7 A0.8 0.8 0 0 1 907.5 381.4 V387.2 A0.8 0.8 0 0 1 906.7 388 H905"/>
<rect x="894.3" y="385.7" width="10.4" height="5.4" fill="#fff"/>
</g>
</svg>
<!-- FOOTER ICONS -->
<svg style="left:0;top:0" width="1014" height="727" viewBox="0 0 1014 727">
<rect x="23.75" y="701.75" width="14.5" height="12.5" fill="none" stroke="#9c9c9c" stroke-width="1.5"/>
<rect x="23" y="701" width="4.8" height="14" fill="#9c9c9c"/>
<g fill="#cdcdcd">
<rect x="58" y="701" width="4" height="4"/><rect x="63" y="701" width="4" height="4"/><rect x="68" y="701" width="4" height="4"/>
<rect x="58" y="706" width="4" height="4"/><rect x="63" y="706" width="4" height="4"/><rect x="68" y="706" width="4" height="4"/>
<rect x="58" y="711" width="4" height="4"/><rect x="63" y="711" width="4" height="4"/><rect x="68" y="711" width="4" height="4"/>
</g>
<rect x="764.5" y="701" width="16.8" height="13.6" fill="#ababab"/>
<rect x="765.9" y="702.1" width="14.3" height="2.7" fill="#fff"/>
<path d="M768.2 708.5 H777.8 M768.2 711.4 H773.6" stroke="#fff" stroke-width="1"/>
<rect x="798" y="701" width="15.7" height="11.8" fill="#ababab"/>
<path d="M799.4 702.4 L805.7 708.5 L811.9 702.4" fill="none" stroke="#fff" stroke-width="1.1"/>
<path d="M807.5 709.3 H812.5 V707.3 L817 711.7 L812.5 716 V714 H807.5 Z" fill="#ababab" stroke="#f0f0f0" stroke-width="1"/>
<path d="M820.5 406 Z" fill="none"/>
<path d="M820.3 706.2 H816.3 V704.3 L812.2 707.4 L816.3 710.5 V708.6 H820.3 Z" fill="#ababab" stroke="#f0f0f0" stroke-width="0.8"/>
<rect x="837.2" y="701" width="15.4" height="13.6" fill="#ababab"/>
<circle cx="840.6" cy="705" r="1.7" fill="#fff"/>
<path d="M838 713.8 V712.6 L840.4 710.1 L843.6 711.9 L847.6 707.2 L851.8 712.5 V713.8 Z" fill="#fff"/>
<rect x="870.2" y="702.1" width="8.5" height="10.7" fill="#444"/>
<rect x="880.3" y="702.1" width="8.5" height="10.7" fill="#444"/>
<path d="M872 704.5 H877.1 M872 707.4 H877.1 M872 710.4 H875" stroke="#fff" stroke-width="1"/>
</svg>
<!-- MAP CONTROLS -->
<div class="a" style="left:399px;top:50px;width:28px;height:28px;background:#fff;border-radius:5px;box-shadow:0 1px 5px rgba(0,0,0,.13)"></div>
<div class="a" style="left:399px;top:86px;width:28px;height:56px;background:#fff;border-radius:5px;box-shadow:0 1px 5px rgba(0,0,0,.13)"></div>
<div class="a" style="left:399px;top:154px;width:28px;height:112px;background:#fff;border-radius:5px;box-shadow:0 1px 5px rgba(0,0,0,.13)"></div>
<div class="a" style="left:972px;top:173px;width:28px;height:57px;background:#fff;border-radius:5px;box-shadow:0 1px 5px rgba(0,0,0,.15)"></div>
<div class="a" style="left:972px;top:201px;width:28px;height:1px;background:#bdbdbd"></div>
<svg style="left:0;top:0" width="1014" height="727" viewBox="0 0 1014 727">
<g fill="none" stroke="#5a6270" stroke-width="1.3">
<circle cx="412.2" cy="63.2" r="4.8"/>
<path d="M415.6 66.6 L419.3 70.1" stroke-width="1.5"/>
<path d="M405.5 99.6 C408 95.3 417.2 95.3 419.7 99.6 C417.2 103.9 408 103.9 405.5 99.6 Z"/>
</g>
<circle cx="412.6" cy="99.5" r="2.6" fill="#5a6270"/>
<circle cx="411.8" cy="98.7" r="0.8" fill="#fff"/>
<path d="M405.3 124.5 L409.8 123.7 V133.2 L405.3 134 Z M410.8 123.7 L414.6 124.5 V134 L410.8 133.2 Z M415.6 124.5 L420.3 123.7 V133.2 L415.6 134 Z" fill="#5a6270"/>
<g fill="none" stroke="#5a6270" stroke-width="1.5">
<path d="M408 161.7 H418.5"/>
<path d="M409.6 159.5 L407.2 161.7 L409.6 163.9 M416.9 159.5 L419.3 161.7 L416.9 163.9"/>
<rect x="405.2" y="168" width="15.8" height="8" rx="1.5"/>
<path d="M408.6 168 V172.5 M411.7 168 V170.6 M414.8 168 V172.5 M417.8 168 V170.6" stroke-width="1.3"/>
<path d="M416 189.8 H410 A3.1 3.1 0 0 0 410 196 H415.8 A3.05 3.05 0 0 1 415.8 202.1 H410"/>
<circle cx="418.2" cy="189.8" r="2.2" fill="#fff"/>
<circle cx="407.8" cy="202.1" r="2.2" fill="#fff"/>
<path d="M405 219 A2.9 2.9 0 0 1 410.8 219 C410.8 221 409.2 222.8 407.9 224.4 C406.6 222.8 405 221 405 219 Z M415 219 A2.9 2.9 0 0 1 420.8 219 C420.8 221 419.2 222.8 417.9 224.4 C416.6 222.8 415 221 415 219 Z" stroke-width="1.3"/>
<path d="M410 230 H415.6" stroke-width="1.2"/>
<circle cx="407.8" cy="230" r="2.1" stroke-width="1.4"/>
<circle cx="417.8" cy="230" r="2.1" stroke-width="1.4"/>
<path d="M410.2 247.3 L415.5 251.9 L410.2 256.5" stroke="#3c4a6c"/>
</g>
<circle cx="412.8" cy="196" r="1.1" fill="#5a6270"/>
<circle cx="407.9" cy="219" r="1" fill="#5a6270"/>
<circle cx="417.9" cy="219" r="1" fill="#5a6270"/>
<path d="M981 187 H991 M986 182 V192 M981 215.5 H991" stroke="#4b5260" stroke-width="2"/>
</svg>
</div>
<!-- FRAME BORDER -->
<div class="a" style="left:0;top:0;width:1014px;height:727px;border:2px solid #4c5a78;border-radius:3px"></div>

<!-- HIGHLIGHT -->
<div class="a" style="left:383px;top:360px;width:635px;height:46px;border:2.7px solid #5cd9ee;border-radius:5px"></div>
<div class="a" style="left:1021px;top:382px;width:21px;height:3px;background:#0b1f45;border-top:1px solid #fff;border-bottom:1px solid #fff"></div>
<div class="a" style="left:1013.5px;top:379px;width:9px;height:9px;border-radius:50%;background:#0b1f45;border:1.5px solid #fff"></div>
<div class="a" style="left:1041px;top:362px;width:182px;height:43px;background:#0b1f45;border:1.5px solid #fff;border-radius:6px"></div>
<div class="t" style="left:1053px;top:375px;color:#fff;font-size:15.75px;line-height:18px">Barra de herramientas</div>
</body></html>
